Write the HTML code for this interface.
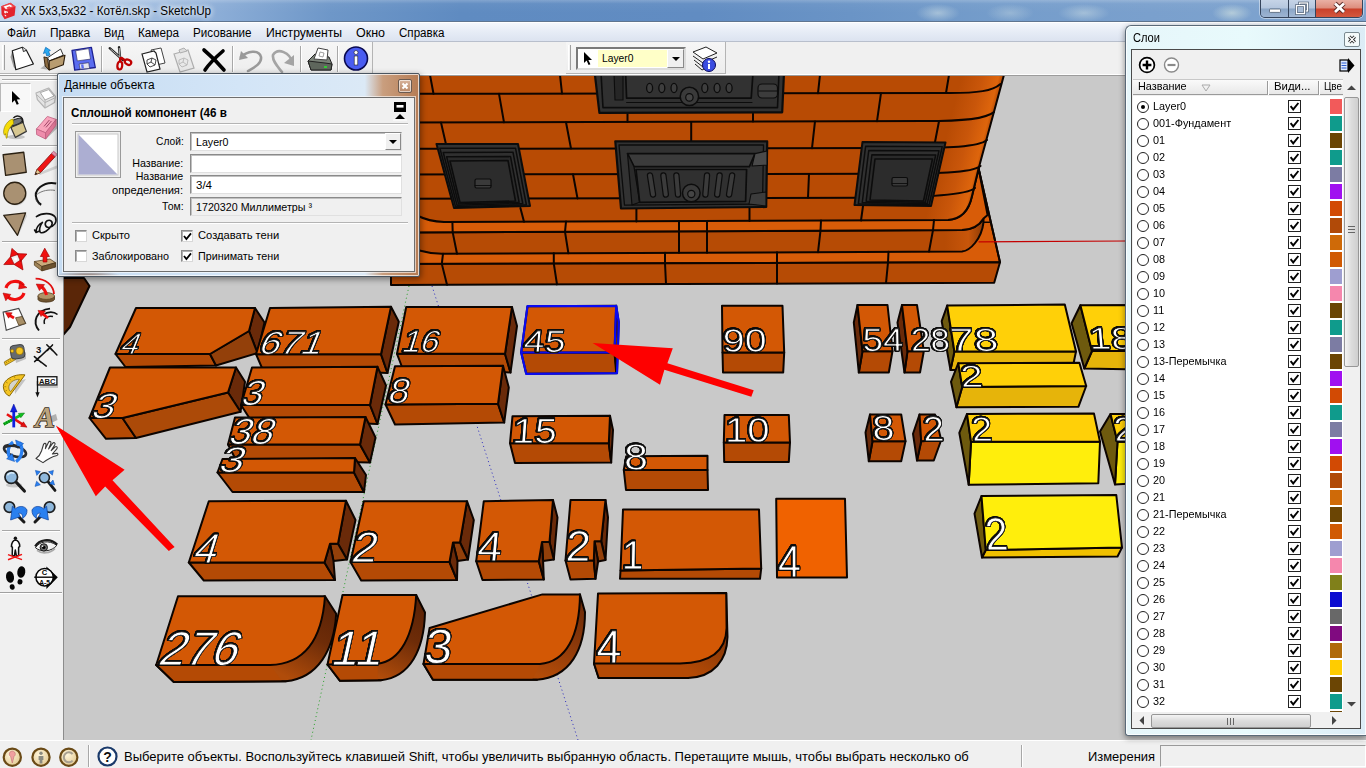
<!DOCTYPE html>
<html lang="ru">
<head>
<meta charset="utf-8">
<title>ХК 5х3,5х32 - Котёл.skp - SketchUp</title>
<style>
*{box-sizing:border-box;margin:0;padding:0}
html,body{width:1366px;height:768px;overflow:hidden;background:#c8c8c8;font-family:"Liberation Sans",sans-serif;font-size:12px;color:#000}
.abs{position:absolute}
#titlebar{left:0;top:0;width:1366px;height:22px;background:linear-gradient(90deg,#c2d5ed 0,#aec7e5 110px,#8eafd8 210px,#6e97c8 330px,#5f8bc1 460px,#618cc2 700px,#6a94c6 850px,#759dcb 1000px,#7aa0cd 1150px,#7fa4cf 1366px)}
#titlebar .t{left:21px;top:4px;font-size:12px;white-space:nowrap;text-shadow:0 0 6px #fff,0 0 6px #fff}
#menubar{left:0;top:22px;width:1366px;height:20px;background:linear-gradient(#f4f7fc 0,#e6ecf6 50%,#dce3f0 100%);border-top:1px solid #fff;border-bottom:1px solid #b8bfcc}
#menubar span{position:absolute;top:2.5px;font-size:12px;white-space:nowrap}#menubar b{font-weight:normal}
#toolbar{left:0;top:42px;width:1366px;height:34px;background:#f0f0f0;border-bottom:1px solid #9c9c9c;box-shadow:inset 0 -1px 0 #fff}
#lefttb{left:0;top:76px;width:64px;height:664px;background:#f0f0f0;border-right:1px solid #8c8c8c}
#status{left:0;top:740px;width:1366px;height:28px;background:#f0f0f0;border-top:1px solid #fff}
#view{left:64px;top:76px;width:1302px;height:664px;background:#c8c8c8}

.sx{display:inline-block;transform-origin:0 50%;white-space:nowrap}.sr{transform-origin:100% 50%}
.sep{position:absolute;top:4px;width:2px;height:26px;border-left:1px solid #a8a8a8;border-right:1px solid #fff}
.ico{position:absolute}
#tb1{left:0;top:0;width:373px;height:32px;border-right:1px solid #b4b4b4;border-bottom:1px solid #b4b4b4;background:linear-gradient(#f6f6f6,#ededed)}
#tb2{left:566px;top:0;width:160px;height:32px;border-right:1px solid #b4b4b4;border-bottom:1px solid #b4b4b4;background:linear-gradient(#f6f6f6,#ededed)}
.grip{position:absolute;left:2px;top:3px;width:3px;height:25px;border-left:1px solid #fff;border-right:1px solid #a0a0a0}
#lcombo{left:576px;top:5px;width:110px;height:23px;background:#fff;border:2px solid;border-color:#7a7a7a #dcdcdc #dcdcdc #7a7a7a}
#lcombo .hl{position:absolute;left:20px;top:1px;width:70px;height:17px;background:#ffffc8}
#lcombo .tx{position:absolute;left:24px;top:3px;font-size:11px}
#lcombo .btn{position:absolute;right:0;top:0;width:17px;height:19px;background:#f0f0f0;border:1px solid;border-color:#fff #8a8a8a #8a8a8a #fff}
#lcombo .btn:after{content:"";position:absolute;left:4px;top:7px;border:4px solid transparent;border-top:4px solid #000;border-bottom:0}
#status .st{position:absolute;left:124px;top:8px;font-size:13px;white-space:nowrap}
#status .meas{position:absolute;left:1088px;top:8px;font-size:13px}
#status .box{position:absolute;left:1160px;top:4px;width:206px;height:22px;background:#f0f0f0;border:1px solid;border-color:#9a9a9a #fff #fff #9a9a9a}
#status .vs{position:absolute;top:4px;width:2px;height:22px;border-left:1px solid #a8a8a8;border-right:1px solid #fff}
.sbi{position:absolute;top:5px;width:19px;height:19px;border-radius:50%;border:2px solid #8a5a2a;background:#f6e6c0}

#ei{left:57px;top:73px;width:363px;height:204px;border:1px solid #4a5560;border-radius:2px;background:radial-gradient(ellipse 34px 7px at 30px 203px,rgba(120,70,40,.75),transparent),linear-gradient(90deg,#c6dcf2 0,#d3e5f7 50%,#dbe9f6 85%,#c99e7e 90%,#b67c54 100%);box-shadow:1px 2px 6px rgba(0,0,0,.45),inset 0 0 0 1px rgba(255,255,255,.7)}
#ei .ttl{left:6px;top:4px;font-size:12px}
#ei .cls{left:340px;top:5px;width:14px;height:14px;border:1px solid #6a5a50;border-radius:2px;background:linear-gradient(#d8b49c,#b88868);box-shadow:inset 0 0 0 1px rgba(255,255,255,.6)}
#ei .in{left:5px;top:23px;width:352px;height:175px;background:#f0f0f0;border:1px solid #6e6e6e;box-shadow:0 0 0 1px rgba(255,255,255,.6)}
.lbl{position:absolute;font-size:11px;white-space:nowrap;text-align:right;right:230.5px}
.inp{position:absolute;left:126px;width:212px;height:19px;background:#fff;border:1px solid;border-color:#8a8a8a #e0e0e0 #e0e0e0 #8a8a8a;font-size:11px;padding:3px 0 0 5px;box-shadow:inset 1px 1px 0 #c0c0c0}
.hr{position:absolute;left:8px;width:336px;height:2px;border-top:1px solid #b4b4b4;border-bottom:1px solid #fff}
.cb{position:absolute;width:12px;height:12px;background:#fff;border:1px solid;border-color:#8a8a8a #d8d8d8 #d8d8d8 #8a8a8a;box-shadow:inset 1px 1px 0 #b0b0b0}
.cbl{position:absolute;font-size:11px;white-space:nowrap}
#ly{left:1125px;top:25px;width:241px;height:711px;border:1px solid #5a6a78;border-right:0;border-radius:6px 0 0 3px;background:linear-gradient(90deg,#e6f6fa 0,#e8fafc 50%,#dcecf6 100%);box-shadow:0 2px 6px rgba(0,0,0,.45),inset 0 0 0 1px rgba(255,255,255,.8)}
#ly .ttl{left:7px;top:5px;font-size:12px}
#ly .cls{left:218px;top:6px;width:16px;height:15px;border:1px solid #7a8a90;border-radius:2px;background:#f4fafa}
#ly .in{left:5px;top:23px;width:230px;height:680px;background:#f0f0f0;border:1px solid #4a4a4a}
#ly .hdr{left:1px;top:28.5px;width:210px;height:16px;background:linear-gradient(#fafafa,#e8e8e8);border-top:1px solid #c8c8c8;border-bottom:1px solid #9a9a9a;font-size:11px}
#ly .hdr i{position:absolute;top:1px;width:2px;height:14px;border-left:1px solid #9a9a9a;border-right:1px solid #fff}
#ly .hdr span{position:absolute;top:0}#ly .hdr b{font-weight:normal}
#ly .list{left:1px;top:46px;width:210px;height:615.5px;background:#fff;overflow:hidden}
.row{position:absolute;left:0;width:210px;height:17px;font-size:11px}
.row .rd{position:absolute;left:4px;top:2px;width:12px;height:12px;border:1px solid #222;border-radius:50%;background:#fff}
.row .nm{position:absolute;left:20px;top:1px;white-space:nowrap;transform-origin:0 50%;transform:scaleX(0.985)}
.row .ck{position:absolute;left:155px;top:1px;width:13px;height:13px;border:1px solid #222;background:#fff}
.row .sw{position:absolute;left:197px;top:0;width:12px;height:15px}
#ly .vsb{left:211px;top:28.5px;width:17px;height:634px;background:#f0f0f0}
#ly .hsb{left:1px;top:662.5px;width:227px;height:15.5px;background:#f0f0f0}
.thumb{position:absolute;border:1px solid #979797;border-radius:2px;background:linear-gradient(90deg,#f4f4f4,#dcdcdc 50%,#cfcfcf)}
.thumbh{position:absolute;border:1px solid #979797;border-radius:2px;background:linear-gradient(#f4f4f4,#dcdcdc 50%,#cfcfcf)}

#titlebar{border-bottom:1px solid #5f7590}
#titlebar:after{content:"";position:absolute;left:0;top:0;width:1366px;height:21px;background:radial-gradient(ellipse 22px 9px at 938px 13px,rgba(230,240,235,.45),transparent),radial-gradient(ellipse 26px 9px at 1084px 13px,rgba(230,240,235,.4),transparent),radial-gradient(ellipse 20px 9px at 1232px 13px,rgba(235,245,230,.5),transparent),radial-gradient(ellipse 24px 9px at 1010px 13px,rgba(230,240,235,.3),transparent),linear-gradient(rgba(255,255,255,.22),rgba(255,255,255,.04) 18%,rgba(255,255,255,0) 60%)}
#wc{left:1260px;top:0;width:103px;height:18px;border:1px solid #35445c;border-top:0;border-radius:0 0 5px 5px;overflow:hidden;box-shadow:0 0 0 1px rgba(255,255,255,.45)}
#wc div{position:absolute;top:0;height:17px}
#wc .mn{left:0;width:28px;background:linear-gradient(#c6d4e7 0,#b4c6de 48%,#8aa5c6 52%,#9db4d2 100%);border-right:1px solid #35445c}
#wc .mx{left:28px;width:27px;background:linear-gradient(#c6d4e7 0,#b4c6de 48%,#8aa5c6 52%,#a3b8d4 100%);border-right:1px solid #35445c}
#wc .cl{left:55px;width:47px;background:linear-gradient(#e9b0a4 0,#dd8c7c 48%,#c9402a 52%,#d4583e 100%)}
</style>
</head>
<body>
<div id="view" class="abs">
<svg id="scene" width="1302" height="665" viewBox="64 76 1302 665">
<!--SCENE-->
<defs>
<linearGradient id="gw" gradientUnits="userSpaceOnUse" x1="964" y1="65.5" x2="1004" y2="75.6"><stop offset="0" stop-color="#b84b04"/><stop offset=".5" stop-color="#c9560a"/><stop offset=".88" stop-color="#de650c"/><stop offset="1" stop-color="#b04804"/></linearGradient>
<linearGradient id="gp" gradientUnits="userSpaceOnUse" x1="945" y1="0" x2="984" y2="0"><stop offset="0" stop-color="#b64b05"/><stop offset=".6" stop-color="#c8560a"/><stop offset="1" stop-color="#8a3a06"/></linearGradient>
<linearGradient id="gr1" gradientUnits="userSpaceOnUse" x1="334" y1="604" x2="292" y2="680"><stop offset="0" stop-color="#5a2206"/><stop offset=".45" stop-color="#6e2c08"/><stop offset="1" stop-color="#b04c0a"/></linearGradient>
<linearGradient id="gr2" gradientUnits="userSpaceOnUse" x1="424" y1="604" x2="386" y2="680"><stop offset="0" stop-color="#5a2206"/><stop offset=".45" stop-color="#6e2c08"/><stop offset="1" stop-color="#b04c0a"/></linearGradient>
<linearGradient id="gr3" gradientUnits="userSpaceOnUse" x1="585" y1="600" x2="550" y2="680"><stop offset="0" stop-color="#6a2a08"/><stop offset=".5" stop-color="#8a380a"/><stop offset="1" stop-color="#b44c08"/></linearGradient>
<linearGradient id="gr4" gradientUnits="userSpaceOnUse" x1="728" y1="630" x2="700" y2="678"><stop offset="0" stop-color="#7a3208"/><stop offset="1" stop-color="#b44a05"/></linearGradient>
</defs>
<rect x="63" y="75" width="1303" height="666" fill="#c9c9c9"/>
<line x1="409" y1="286" x2="311" y2="740" stroke="#28a028" stroke-width="1" stroke-dasharray="1 3"/>
<line x1="432" y1="286" x2="578" y2="740" stroke="#2828c0" stroke-width="1" stroke-dasharray="1 3"/>
<polygon points="978.6,168.5 1000,262.3 391,264 391,247 960,250" fill="#d85c08" stroke="#0c0400" stroke-width="2" stroke-linejoin="round" />
<polygon points="391,264 1000,262.3 994.2,282.8 391,285" fill="#b64b05" stroke="#0c0400" stroke-width="2" stroke-linejoin="round" />
<path d="M391 232.6 L962 230 C972 229.5 979 226 983.5 218.4 L983.5 222.3 C982.5 231 979 238 975 243 C971 248 967 251 962 251.5 L442 253.8 C430 253.4 424 252 417 250 L391 250 Z" fill="url(#gp)" stroke="#0c0400" stroke-width="2" stroke-linejoin="round" stroke-linecap="round" />
<path d="M391 213 L948 220 C962 219 969 210 972 196 L978.6 168.5 L987.6 215 L983.5 218.4 C979 226 972 229.5 962 230 L391 232.6 Z" fill="#d85c08" stroke="#0c0400" stroke-width="2" stroke-linejoin="round" stroke-linecap="round" />
<path d="M391 73 L1004.5 73 L978.6 168.5 L972 196 C969 210 962 219 948 220 L444 222 C432 221.5 424 219 417 215.5 L391 215.5 Z" fill="url(#gw)" stroke="#0c0400" stroke-width="2" stroke-linejoin="round" stroke-linecap="round" />
<line x1="983.5" y1="222.3" x2="989.5" y2="222.3" stroke="#0c0400" stroke-width="1.4" stroke-linecap="round" />
<path d="M400 93.8 L950 93.0143 C977.775 93.0143 992.5 91 1000.5 84" fill="none" stroke="#0c0400" stroke-width="2" stroke-linejoin="round" stroke-linecap="round" />
<path d="M400 122.5 L925 121.094 C962.95 121.094 986 119 994 112" fill="none" stroke="#0c0400" stroke-width="2" stroke-linejoin="round" stroke-linecap="round" />
<path d="M400 148.8 L900 148.086 C947.85 148.086 979 147 987 140" fill="none" stroke="#0c0400" stroke-width="2" stroke-linejoin="round" stroke-linecap="round" />
<path d="M400 174.5 L880 173.814 C935.275 173.814 972.5 173 980.5 166" fill="none" stroke="#0c0400" stroke-width="2" stroke-linejoin="round" stroke-linecap="round" />
<path d="M400 198.8 L862 197.727 C924.15 197.727 967 195 975 188" fill="none" stroke="#0c0400" stroke-width="2" stroke-linejoin="round" stroke-linecap="round" />
<line x1="430" y1="75" x2="433.5" y2="93.8" stroke="#0c0400" stroke-width="2" stroke-linecap="round" />
<line x1="560" y1="75" x2="562" y2="93.5" stroke="#0c0400" stroke-width="2" stroke-linecap="round" />
<line x1="820" y1="75" x2="818" y2="93.2" stroke="#0c0400" stroke-width="2" stroke-linecap="round" />
<line x1="949" y1="75" x2="946" y2="93" stroke="#0c0400" stroke-width="2" stroke-linecap="round" />
<line x1="499" y1="93.8" x2="504" y2="122.3" stroke="#0c0400" stroke-width="2" stroke-linecap="round" />
<line x1="627.5" y1="113.5" x2="627.5" y2="122" stroke="#0c0400" stroke-width="2" stroke-linecap="round" />
<line x1="753" y1="113.5" x2="753" y2="121.6" stroke="#0c0400" stroke-width="2" stroke-linecap="round" />
<line x1="881" y1="93.2" x2="877" y2="121.2" stroke="#0c0400" stroke-width="2" stroke-linecap="round" />
<line x1="441" y1="122.5" x2="447" y2="148.7" stroke="#0c0400" stroke-width="2" stroke-linecap="round" />
<line x1="566" y1="122.3" x2="571" y2="148.5" stroke="#0c0400" stroke-width="2" stroke-linecap="round" />
<line x1="691.2" y1="122" x2="691.2" y2="141" stroke="#0c0400" stroke-width="2" stroke-linecap="round" />
<line x1="815" y1="121.4" x2="812" y2="148.2" stroke="#0c0400" stroke-width="2" stroke-linecap="round" />
<line x1="939" y1="121.2" x2="935" y2="142" stroke="#0c0400" stroke-width="2" stroke-linecap="round" />
<line x1="573" y1="174.3" x2="577.5" y2="198.4" stroke="#0c0400" stroke-width="2" stroke-linecap="round" />
<line x1="809" y1="174" x2="808" y2="197.8" stroke="#0c0400" stroke-width="2" stroke-linecap="round" />
<line x1="520.4" y1="208" x2="524" y2="221.8" stroke="#0c0400" stroke-width="2" stroke-linecap="round" />
<line x1="636.4" y1="209" x2="636.4" y2="221.4" stroke="#0c0400" stroke-width="2" stroke-linecap="round" />
<line x1="749.5" y1="207" x2="749.5" y2="221" stroke="#0c0400" stroke-width="2" stroke-linecap="round" />
<line x1="863" y1="206" x2="861" y2="220.5" stroke="#0c0400" stroke-width="2" stroke-linecap="round" />
<path d="M452.4 221.994 L452.7 232.355 L457 253.746" fill="none" stroke="#0c0400" stroke-width="2" stroke-linejoin="round" stroke-linecap="round" />
<path d="M566 221.548 L565 231.834 L568.4 253.248" fill="none" stroke="#0c0400" stroke-width="2" stroke-linejoin="round" stroke-linecap="round" />
<path d="M679 221.104 L679 231.305 L679 252.754" fill="none" stroke="#0c0400" stroke-width="2" stroke-linejoin="round" stroke-linecap="round" />
<path d="M707 220.994 L707 231.175 L707 252.629" fill="none" stroke="#0c0400" stroke-width="2" stroke-linejoin="round" stroke-linecap="round" />
<path d="M821 220.546 L820.5 230.648 L818 252.134" fill="none" stroke="#0c0400" stroke-width="2" stroke-linejoin="round" stroke-linecap="round" />
<path d="M934 220.102 L933 230.125 L929 251.638" fill="none" stroke="#0c0400" stroke-width="2" stroke-linejoin="round" stroke-linecap="round" />
<path d="M443 253.808 L441.8 263.873 L447 284.815" fill="none" stroke="#0c0400" stroke-width="2" stroke-linejoin="round" stroke-linecap="round" />
<path d="M553.8 253.313 L553.8 263.533 L557 284.383" fill="none" stroke="#0c0400" stroke-width="2" stroke-linejoin="round" stroke-linecap="round" />
<path d="M665 252.817 L665 263.196 L666 283.955" fill="none" stroke="#0c0400" stroke-width="2" stroke-linejoin="round" stroke-linecap="round" />
<path d="M777 252.317 L777 262.856 L777 283.519" fill="none" stroke="#0c0400" stroke-width="2" stroke-linejoin="round" stroke-linecap="round" />
<path d="M888.5 251.819 L888 262.519 L886 283.091" fill="none" stroke="#0c0400" stroke-width="2" stroke-linejoin="round" stroke-linecap="round" />
<polygon points="436.5,144 518,144 530,206 454,208" fill="#323232" stroke="#0c0c0c" stroke-width="2" stroke-linejoin="round" />
<polygon points="439.875,148.25 515.5,148.125 526.375,204.75 455.5,206.625" fill="#303030" stroke="#0c0c0c" stroke-width="1.5" stroke-linejoin="round" />
<polygon points="443.25,152.5 513,152.25 522.75,203.5 457,205.25" fill="#303030" stroke="#0c0c0c" stroke-width="1.5" stroke-linejoin="round" />
<polygon points="446.625,156.75 510.5,156.375 519.125,202.25 458.5,203.875" fill="#2a2a2a" stroke="#0c0c0c" stroke-width="1.5" stroke-linejoin="round" />
<polygon points="450,161 508,160.5 515.5,201 460,202.5" fill="#2c2c2c" stroke="#0c0c0c" stroke-width="1.6" stroke-linejoin="round" />
<rect x="475" y="179" width="16" height="9" rx="1.5" fill="#3a3a3a" stroke="#0c0c0c" stroke-width="1.2"/>
<line x1="475" y1="185.5" x2="491" y2="185.5" stroke="#0c0c0c" stroke-width="0.9" stroke-linecap="round" />
<polygon points="862.5,142 945.5,142.5 931,206 854.5,205" fill="#323232" stroke="#0c0c0c" stroke-width="2" stroke-linejoin="round" />
<polygon points="865.625,146.25 942.25,146.625 929.125,204.75 858.375,203.75" fill="#303030" stroke="#0c0c0c" stroke-width="1.5" stroke-linejoin="round" />
<polygon points="868.75,150.5 939,150.75 927.25,203.5 862.25,202.5" fill="#303030" stroke="#0c0c0c" stroke-width="1.5" stroke-linejoin="round" />
<polygon points="871.875,154.75 935.75,154.875 925.375,202.25 866.125,201.25" fill="#2a2a2a" stroke="#0c0c0c" stroke-width="1.5" stroke-linejoin="round" />
<polygon points="875,159 932.5,159 923.5,201 870,200" fill="#2c2c2c" stroke="#0c0c0c" stroke-width="1.6" stroke-linejoin="round" />
<rect x="892" y="177.5" width="15.5" height="8.5" rx="1.5" fill="#3a3a3a" stroke="#0c0c0c" stroke-width="1.2"/>
<line x1="892" y1="183.5" x2="907.5" y2="183.5" stroke="#0c0c0c" stroke-width="0.9" stroke-linecap="round" />
<polygon points="615.3,141.4 767.2,141.4 766.2,207 621,208.5" fill="#323232" stroke="#0c0c0c" stroke-width="2.2" stroke-linejoin="round" />
<polygon points="619,145 763.5,145 762.5,204 624.5,205.2" fill="#323232" stroke="#0c0c0c" stroke-width="1.3" stroke-linejoin="round" />
<polygon points="627.5,153.6 755,153.6 749.4,166.7 634,166.7" fill="#3b3b3b" stroke="#0c0c0c" stroke-width="1.7" stroke-linejoin="round" />
<polygon points="627.5,153.6 634,166.7 639.7,202.3 632,205" fill="#2a2a2a" stroke="#0c0c0c" stroke-width="1.2" stroke-linejoin="round" />
<polygon points="636,169.5 746.6,169.5 745.6,201.4 639.7,202.3" fill="#303030" stroke="#0c0c0c" stroke-width="1.7" stroke-linejoin="round" />
<path d="M650 175.5 L653 194.5" fill="none" stroke="#0c0c0c" stroke-width="6.4" stroke-linejoin="round" stroke-linecap="round" />
<path d="M650 175.5 L653 194.5" fill="none" stroke="#3b3b3b" stroke-width="4" stroke-linejoin="round" stroke-linecap="round" />
<path d="M663.4 175.5 L665.8 194.5" fill="none" stroke="#0c0c0c" stroke-width="6.4" stroke-linejoin="round" stroke-linecap="round" />
<path d="M663.4 175.5 L665.8 194.5" fill="none" stroke="#3b3b3b" stroke-width="4" stroke-linejoin="round" stroke-linecap="round" />
<path d="M676.4 175.5 L678 194.5" fill="none" stroke="#0c0c0c" stroke-width="6.4" stroke-linejoin="round" stroke-linecap="round" />
<path d="M676.4 175.5 L678 194.5" fill="none" stroke="#3b3b3b" stroke-width="4" stroke-linejoin="round" stroke-linecap="round" />
<path d="M707 175.5 L705.4 194.5" fill="none" stroke="#0c0c0c" stroke-width="6.4" stroke-linejoin="round" stroke-linecap="round" />
<path d="M707 175.5 L705.4 194.5" fill="none" stroke="#3b3b3b" stroke-width="4" stroke-linejoin="round" stroke-linecap="round" />
<path d="M719.6 175.5 L717.2 194.5" fill="none" stroke="#0c0c0c" stroke-width="6.4" stroke-linejoin="round" stroke-linecap="round" />
<path d="M719.6 175.5 L717.2 194.5" fill="none" stroke="#3b3b3b" stroke-width="4" stroke-linejoin="round" stroke-linecap="round" />
<path d="M732.1 175.5 L729.1 194.5" fill="none" stroke="#0c0c0c" stroke-width="6.4" stroke-linejoin="round" stroke-linecap="round" />
<path d="M732.1 175.5 L729.1 194.5" fill="none" stroke="#3b3b3b" stroke-width="4" stroke-linejoin="round" stroke-linecap="round" />
<circle cx="691.3" cy="193" r="8.8" fill="#3a3a3a" stroke="#0c0c0c" stroke-width="1.5"/><circle cx="691.3" cy="194" r="3.6" fill="#454545" stroke="#0c0c0c" stroke-width="1.2"/>
<polygon points="755,153.6 767,151 767,165 752,166" fill="#4a4a4a" stroke="#0c0c0c" stroke-width="1.1" stroke-linejoin="round" />
<polygon points="751,194 766,192 766,206 749,204" fill="#3c3c3c" stroke="#0c0c0c" stroke-width="1.1" stroke-linejoin="round" />
<polygon points="594.7,73 784,73 782.2,112.3 599.4,112.8" fill="#323232" stroke="#0c0c0c" stroke-width="2.2" stroke-linejoin="round" />
<polygon points="601,73 779,73 777.5,107.6 603,107.6" fill="#303030" stroke="#0c0c0c" stroke-width="1.6" stroke-linejoin="round" />
<polygon points="614,73 623,73 623,100 615,100" fill="#262626" stroke="#0c0c0c" stroke-width="1.1" stroke-linejoin="round" />
<polygon points="625.6,73 753,73 751.2,98.2 626.6,98.2" fill="#323232" stroke="#0c0c0c" stroke-width="1.7" stroke-linejoin="round" />
<line x1="626.6" y1="102.5" x2="752" y2="102.5" stroke="#0c0c0c" stroke-width="1.1" stroke-linecap="round" />
<ellipse cx="649.6" cy="88" rx="3" ry="4.6" fill="#3e3e3e" stroke="#0c0c0c" stroke-width="1.3"/>
<ellipse cx="661.8" cy="88" rx="3" ry="4.6" fill="#3e3e3e" stroke="#0c0c0c" stroke-width="1.3"/>
<ellipse cx="674" cy="88" rx="3" ry="4.6" fill="#3e3e3e" stroke="#0c0c0c" stroke-width="1.3"/>
<ellipse cx="704.8" cy="88" rx="3" ry="4.6" fill="#3e3e3e" stroke="#0c0c0c" stroke-width="1.3"/>
<ellipse cx="717.1" cy="88" rx="3" ry="4.6" fill="#3e3e3e" stroke="#0c0c0c" stroke-width="1.3"/>
<ellipse cx="729.1" cy="88" rx="3" ry="4.6" fill="#3e3e3e" stroke="#0c0c0c" stroke-width="1.3"/>
<circle cx="689.4" cy="96.4" r="9.2" fill="#3a3a3a" stroke="#0c0c0c" stroke-width="1.5"/><circle cx="689.4" cy="97.4" r="3.7" fill="#454545" stroke="#0c0c0c" stroke-width="1.2"/>
<rect x="758" y="84" width="19.5" height="14" rx="4" fill="#3c3c3c" stroke="#0c0c0c" stroke-width="1.2"/>
<line x1="759" y1="91" x2="777" y2="91" stroke="#0c0c0c" stroke-width="1" stroke-linecap="round" />
<path d="M978.6 168.5 L1000 262.3" fill="none" stroke="#0c0400" stroke-width="1.9" stroke-linejoin="round" stroke-linecap="round" />
<line x1="978.6" y1="241.8" x2="1126" y2="241" stroke="#c40000" stroke-width="1.2"/>
<polygon points="63,278 84,278 89.5,286 70,327 63,335" fill="#5a2608" stroke="#0c0400" stroke-width="2" stroke-linejoin="round" />
<polygon points="115.5,354 210,354 216,365.5 125.5,367" fill="#b44a05" stroke="#0c0400" stroke-width="2" stroke-linejoin="round" />
<polygon points="255,308 264.5,322.5 257.5,353 249,331" fill="#6a2a09" stroke="#0c0400" stroke-width="2" stroke-linejoin="round" />
<polygon points="249,331 257.5,353 216,365.5 210,354" fill="#93400a" stroke="#0c0400" stroke-width="2" stroke-linejoin="round" />
<polygon points="136,308 255,308 249,331 210,354 115.5,354" fill="#d35805" stroke="#0c0400" stroke-width="2" stroke-linejoin="round" />
<polygon points="256,354.2 381,354.2 387.5,373 262,368" fill="#b44a05" stroke="#0c0400" stroke-width="2" stroke-linejoin="round" />
<polygon points="391,306.8 398.8,321.8 387.5,373 381,354.2" fill="#6a2a09" stroke="#0c0400" stroke-width="2" stroke-linejoin="round" />
<polygon points="270,308 391,306.8 381,354.2 256,354.2" fill="#d35805" stroke="#0c0400" stroke-width="2" stroke-linejoin="round" />
<polygon points="397,353.8 505,353.8 510.5,372.5 402,367" fill="#b44a05" stroke="#0c0400" stroke-width="2" stroke-linejoin="round" />
<polygon points="512,307 517,326 510.5,372.5 505,353.8" fill="#6a2a09" stroke="#0c0400" stroke-width="2" stroke-linejoin="round" />
<polygon points="406.2,307 512,307 505,353.8 397,353.8" fill="#d35805" stroke="#0c0400" stroke-width="2" stroke-linejoin="round" />
<polygon points="89.5,418 122.5,418 136,438 106,438.8" fill="#b44a05" stroke="#0c0400" stroke-width="2" stroke-linejoin="round" />
<polygon points="236,367.5 245,381.8 240.5,411.8 228,392.5" fill="#6a2a09" stroke="#0c0400" stroke-width="2" stroke-linejoin="round" />
<polygon points="228,392.5 240.5,411.8 136,438 122.5,418" fill="#ac4a08" stroke="#0c0400" stroke-width="2" stroke-linejoin="round" />
<polygon points="110,367.5 236,367.5 228,392.5 122.5,418 89.5,418" fill="#d35805" stroke="#0c0400" stroke-width="2" stroke-linejoin="round" />
<polygon points="241,405 370,405 377.5,424 250,419" fill="#b44a05" stroke="#0c0400" stroke-width="2" stroke-linejoin="round" />
<polygon points="377.5,366.8 386,385.5 377.5,424 370,405" fill="#6a2a09" stroke="#0c0400" stroke-width="2" stroke-linejoin="round" />
<polygon points="252,367.5 377.5,366.8 370,405 241,405" fill="#d35805" stroke="#0c0400" stroke-width="2" stroke-linejoin="round" />
<polygon points="385.5,404.5 498,403.8 504.2,422.5 395,424.5" fill="#b44a05" stroke="#0c0400" stroke-width="2" stroke-linejoin="round" />
<polygon points="503,365.8 508.8,387.5 504.2,422.5 498,403.8" fill="#6a2a09" stroke="#0c0400" stroke-width="2" stroke-linejoin="round" />
<polygon points="395,366.2 503,365.8 498,403.8 385.5,404.5" fill="#d35805" stroke="#0c0400" stroke-width="2" stroke-linejoin="round" />
<polygon points="228,444.5 360,444.5 370,462.5 236,460" fill="#b44a05" stroke="#0c0400" stroke-width="2" stroke-linejoin="round" />
<polygon points="365.5,417 375.5,437.5 370,462.5 360,444.5" fill="#6a2a09" stroke="#0c0400" stroke-width="2" stroke-linejoin="round" />
<polygon points="235,417.5 365.5,417 360,444.5 228,444.5" fill="#d35805" stroke="#0c0400" stroke-width="2" stroke-linejoin="round" />
<polygon points="217.5,472.5 354,472.5 364,492 232.5,492" fill="#b44a05" stroke="#0c0400" stroke-width="2" stroke-linejoin="round" />
<polygon points="355,458 366,475 364,492 354,472.5" fill="#6a2a09" stroke="#0c0400" stroke-width="2" stroke-linejoin="round" />
<polygon points="222.5,459 355,458 354,472.5 217.5,472.5" fill="#d35805" stroke="#0c0400" stroke-width="2" stroke-linejoin="round" />
<polygon points="521.2,352.5 614.5,352.5 616.2,373.2 526.2,373.8" fill="#b44a05" stroke="#0c0400" stroke-width="2" stroke-linejoin="round" />
<polygon points="616.2,305.8 618.8,322.5 617,373.2 614.5,352.5" fill="#6a2a09" stroke="#0c0400" stroke-width="2" stroke-linejoin="round" />
<polygon points="527.5,306.2 616.2,305.8 614.5,352.5 521.2,352.5" fill="#d35805" stroke="#0c0400" stroke-width="2" stroke-linejoin="round" />
<path d="M527.5 306.2 L616.2 305.8 L618.8 322.5 L617 373.2 L526.2 373.8 L521.2 352.5 Z M521.2 352.5 L614.5 352.5 L616.2 305.8" fill="none" stroke="#0a0af0" stroke-width="2.2" stroke-linejoin="round" stroke-linecap="round" />
<polygon points="510,443.2 608.8,443.2 611.2,462.5 515,463" fill="#b44a05" stroke="#0c0400" stroke-width="2" stroke-linejoin="round" />
<polygon points="610,415.8 613,430 611.2,462.5 608.8,443.2" fill="#6a2a09" stroke="#0c0400" stroke-width="2" stroke-linejoin="round" />
<polygon points="512.5,416.2 610,415.8 608.8,443.2 510,443.2" fill="#d35805" stroke="#0c0400" stroke-width="2" stroke-linejoin="round" />
<polygon points="623.8,470 707.5,470 708,490 626,490" fill="#b44a05" stroke="#0c0400" stroke-width="2" stroke-linejoin="round" />
<polygon points="626.2,456.2 707.5,455.8 707.5,470 623.8,470" fill="#d35805" stroke="#0c0400" stroke-width="2" stroke-linejoin="round" />
<polygon points="722.5,352.5 784.2,352.5 783.2,372.5 723,372.5" fill="#b44a05" stroke="#0c0400" stroke-width="2" stroke-linejoin="round" />
<polygon points="722,305.8 782.5,305.8 784.2,352.5 722.5,352.5" fill="#d35805" stroke="#0c0400" stroke-width="2" stroke-linejoin="round" />
<polygon points="723.8,442.5 790,442.5 788.8,462 724.2,462" fill="#b44a05" stroke="#0c0400" stroke-width="2" stroke-linejoin="round" />
<polygon points="724.5,415 788.8,415 790,442.5 723.8,442.5" fill="#d35805" stroke="#0c0400" stroke-width="2" stroke-linejoin="round" />
<polygon points="862.5,351.2 892.5,351.2 888.8,372.5 858.8,372.5" fill="#b44a05" stroke="#0c0400" stroke-width="2" stroke-linejoin="round" />
<polygon points="857.5,305 853.8,322.5 858.8,372.5 862.5,351.2" fill="#6a2a09" stroke="#0c0400" stroke-width="2" stroke-linejoin="round" />
<polygon points="857.5,305 887.5,305 892.5,351.2 862.5,351.2" fill="#d35805" stroke="#0c0400" stroke-width="2" stroke-linejoin="round" />
<polygon points="907.5,351.2 923.8,351.2 920,372.5 904.5,372.5" fill="#b44a05" stroke="#0c0400" stroke-width="2" stroke-linejoin="round" />
<polygon points="902,305 897.5,322.5 904.5,372.5 907.5,351.2" fill="#6a2a09" stroke="#0c0400" stroke-width="2" stroke-linejoin="round" />
<polygon points="902,305 917,305 923.8,351.2 907.5,351.2" fill="#d35805" stroke="#0c0400" stroke-width="2" stroke-linejoin="round" />
<polygon points="872.5,441.2 905.5,441.2 901.2,461.2 868.8,461.2" fill="#b44a05" stroke="#0c0400" stroke-width="2" stroke-linejoin="round" />
<polygon points="870,414.5 865.5,432.5 868.8,461.2 872.5,441.2" fill="#6a2a09" stroke="#0c0400" stroke-width="2" stroke-linejoin="round" />
<polygon points="870,414.5 901.2,414.5 905.5,441.2 872.5,441.2" fill="#d35805" stroke="#0c0400" stroke-width="2" stroke-linejoin="round" />
<polygon points="921.2,441.2 941.2,440 933.8,460.5 917,460.5" fill="#b44a05" stroke="#0c0400" stroke-width="2" stroke-linejoin="round" />
<polygon points="919.5,414.5 913,433.8 917,460.5 921.2,441.2" fill="#6a2a09" stroke="#0c0400" stroke-width="2" stroke-linejoin="round" />
<polygon points="919.5,414.5 935,414.5 941.2,440 921.2,441.2" fill="#d35805" stroke="#0c0400" stroke-width="2" stroke-linejoin="round" />
<polygon points="954.4,351.5 1076,351.5 1072.6,368 950.5,370" fill="#e6b40a" stroke="#0c0400" stroke-width="2" stroke-linejoin="round" />
<polygon points="947.2,305.6 941.7,321.2 950.5,370 954.4,351.5" fill="#6e5a0e" stroke="#0c0400" stroke-width="2" stroke-linejoin="round" />
<polygon points="947.2,305.6 1064.8,304.6 1076,351.5 954.4,351.5" fill="#ffd008" stroke="#0c0400" stroke-width="2" stroke-linejoin="round" />
<polygon points="1092,351 1140,351 1140,369.5 1084.3,368.5" fill="#e6b40a" stroke="#0c0400" stroke-width="2" stroke-linejoin="round" />
<polygon points="1080.4,305.2 1071.6,323.2 1084.3,368.5 1092,351" fill="#6e5a0e" stroke="#0c0400" stroke-width="2" stroke-linejoin="round" />
<polygon points="1080.4,305.2 1140,305 1140,351 1092,351" fill="#ffd008" stroke="#0c0400" stroke-width="2" stroke-linejoin="round" />
<polygon points="962.2,387 1086.2,386 1078.4,406.8 956.4,407.2" fill="#e6b40a" stroke="#0c0400" stroke-width="2" stroke-linejoin="round" />
<polygon points="958.3,363.2 951,381.8 956.4,407.2 962.2,387" fill="#6e5a0e" stroke="#0c0400" stroke-width="2" stroke-linejoin="round" />
<polygon points="958.3,363.2 1079.4,362.7 1086.2,386 962.2,387" fill="#ffd008" stroke="#0c0400" stroke-width="2" stroke-linejoin="round" />
<polygon points="971,441.7 1100,441.7 1098.3,483.2 968.7,484.8" fill="#ffee0c" stroke="#0c0400" stroke-width="2" stroke-linejoin="round" />
<polygon points="967,414 959.3,432.8 968.7,484.8 971,441.7" fill="#6e5a0e" stroke="#0c0400" stroke-width="2" stroke-linejoin="round" />
<polygon points="967,414 1094,413.6 1100,441.7 971,441.7" fill="#ffd008" stroke="#0c0400" stroke-width="2" stroke-linejoin="round" />
<polygon points="1117.5,441.7 1140,441.7 1140,483 1115,484.4" fill="#ffee0c" stroke="#0c0400" stroke-width="2" stroke-linejoin="round" />
<polygon points="1110.5,414 1100,431.6 1115,484.4 1117.5,441.7" fill="#6e5a0e" stroke="#0c0400" stroke-width="2" stroke-linejoin="round" />
<polygon points="1110.5,414 1140,414 1140,441.7 1117.5,441.7" fill="#ffd008" stroke="#0c0400" stroke-width="2" stroke-linejoin="round" />
<polygon points="985.8,550 1122,547.6 1117.5,556.5 982,557.5" fill="#f0c000" stroke="#0c0400" stroke-width="2" stroke-linejoin="round" />
<polygon points="981.5,496 974.5,513.7 982,557.5 985.8,550" fill="#6e5a0e" stroke="#0c0400" stroke-width="2" stroke-linejoin="round" />
<polygon points="981.5,496 1116.3,495 1122,547.6 985.8,550" fill="#ffee0c" stroke="#0c0400" stroke-width="2" stroke-linejoin="round" />
<polygon points="188.8,562.5 324.5,562.5 335,580 203.8,580.5" fill="#b44a05" stroke="#0c0400" stroke-width="2" stroke-linejoin="round" />
<polygon points="346,500.8 355.5,520 347,559.5 338,543.8" fill="#6a2a09" stroke="#0c0400" stroke-width="2" stroke-linejoin="round" />
<polygon points="330,543.8 338,543.8 347,559.5 333.5,561" fill="#93400a" stroke="#0c0400" stroke-width="2" stroke-linejoin="round" />
<polygon points="330,543.8 333.5,561 335,580 324.5,562.5" fill="#6a2a09" stroke="#0c0400" stroke-width="2" stroke-linejoin="round" />
<polygon points="208.8,501.2 346,500.8 338,543.8 330,543.8 324.5,562.5 188.8,562.5" fill="#d35805" stroke="#0c0400" stroke-width="2" stroke-linejoin="round" />
<polygon points="350.5,562 449.5,562 457,580 361.2,580.5" fill="#b44a05" stroke="#0c0400" stroke-width="2" stroke-linejoin="round" />
<polygon points="467,501.2 473.8,520 468,559.5 460,542.5" fill="#6a2a09" stroke="#0c0400" stroke-width="2" stroke-linejoin="round" />
<polygon points="453,542.5 460,542.5 468,559.5 457.5,561" fill="#93400a" stroke="#0c0400" stroke-width="2" stroke-linejoin="round" />
<polygon points="453,542.5 457.5,561 457,580 449.5,562" fill="#6a2a09" stroke="#0c0400" stroke-width="2" stroke-linejoin="round" />
<polygon points="363.8,501.2 467,501.2 460,542.5 453,542.5 449.5,562 350.5,562" fill="#d35805" stroke="#0c0400" stroke-width="2" stroke-linejoin="round" />
<polygon points="476.2,561.2 538.8,561.2 543.8,579.5 482.5,580" fill="#b44a05" stroke="#0c0400" stroke-width="2" stroke-linejoin="round" />
<polygon points="553,500 557.5,517.5 553.8,559.5 549.5,542" fill="#6a2a09" stroke="#0c0400" stroke-width="2" stroke-linejoin="round" />
<polygon points="542,542 549.5,542 553.8,559.5 543.1,561" fill="#93400a" stroke="#0c0400" stroke-width="2" stroke-linejoin="round" />
<polygon points="542,542 543.1,561 543.8,579.5 538.8,561.2" fill="#6a2a09" stroke="#0c0400" stroke-width="2" stroke-linejoin="round" />
<polygon points="483.8,501.2 553,500 549.5,542 542,542 538.8,561.2 476.2,561.2" fill="#d35805" stroke="#0c0400" stroke-width="2" stroke-linejoin="round" />
<polygon points="565.5,560.5 593.8,560.5 595.5,578.8 570.5,579.5" fill="#b44a05" stroke="#0c0400" stroke-width="2" stroke-linejoin="round" />
<polygon points="605.5,500 608,517.5 605.5,560 601.2,541.2" fill="#6a2a09" stroke="#0c0400" stroke-width="2" stroke-linejoin="round" />
<polygon points="594.5,541.2 601.2,541.2 605.5,560 598.1,561.5" fill="#93400a" stroke="#0c0400" stroke-width="2" stroke-linejoin="round" />
<polygon points="594.5,541.2 598.1,561.5 595.5,578.8 593.8,560.5" fill="#6a2a09" stroke="#0c0400" stroke-width="2" stroke-linejoin="round" />
<polygon points="570.5,500 605.5,500 601.2,541.2 594.5,541.2 593.8,560.5 565.5,560.5" fill="#d35805" stroke="#0c0400" stroke-width="2" stroke-linejoin="round" />
<polygon points="620.5,570.5 761.2,568.5 760,578.8 620,578.8" fill="#b44a05" stroke="#0c0400" stroke-width="2" stroke-linejoin="round" />
<polygon points="623,509.5 759,509.5 761.2,568.5 620.5,570.5" fill="#d35805" stroke="#0c0400" stroke-width="2" stroke-linejoin="round" />
<polygon points="776.2,498.8 845,498.8 847,577.5 777,577.5" fill="#f06200" stroke="#0c0400" stroke-width="2" stroke-linejoin="round" />
<path d="M325 596.2 L336.2 613.8 C334 650 318 678 286 681.3 L173.8 682 L156.2 665 Z" fill="url(#gr1)" stroke="#0c0400" stroke-width="2" stroke-linejoin="round" stroke-linecap="round" />
<polygon points="156.2,665 270,665 282,681.3 173.8,682" fill="#b44a05" stroke="none" stroke-width="0" stroke-linejoin="round" />
<path d="M156.2 665 L173.8 682 L286 681.3" fill="none" stroke="#0c0400" stroke-width="2" stroke-linejoin="round" stroke-linecap="round" />
<path d="M178 596.2 L325 596.2 C322 640 304 664 270 665 L156.2 665 Z" fill="#d35805" stroke="#0c0400" stroke-width="2" stroke-linejoin="round" stroke-linecap="round" />
<path d="M416.2 595 L425 612.5 C424 650 410 677 381 680.2 L340 680.8 L327.5 664.5 Z" fill="url(#gr2)" stroke="#0c0400" stroke-width="2" stroke-linejoin="round" stroke-linecap="round" />
<polygon points="327.5,664.5 377.5,663.8 378,680.2 340,680.8" fill="#b44a05" stroke="none" stroke-width="0" stroke-linejoin="round" />
<path d="M327.5 664.5 L340 680.8 L381 680.2" fill="none" stroke="#0c0400" stroke-width="2" stroke-linejoin="round" stroke-linecap="round" />
<path d="M342.5 595 L416.2 595 C414 636 400 661 377.5 663.8 L327.5 664.5 Z" fill="#d35805" stroke="#0c0400" stroke-width="2" stroke-linejoin="round" stroke-linecap="round" />
<path d="M580 594.4 L585 612 C585 650 570 677 537 679.8 L433 679.8 L423.5 664 Z" fill="url(#gr3)" stroke="#0c0400" stroke-width="2" stroke-linejoin="round" stroke-linecap="round" />
<polygon points="423.5,664 540,664 532,679.8 433,679.8" fill="#b44a05" stroke="none" stroke-width="0" stroke-linejoin="round" />
<path d="M423.5 664 L433 679.8 L537 679.8" fill="none" stroke="#0c0400" stroke-width="2" stroke-linejoin="round" stroke-linecap="round" />
<path d="M429.6 628 L542.4 594.4 L580 594.4 C579.5 636 566 662 540 664 L423.5 664 Z" fill="#d35805" stroke="#0c0400" stroke-width="2" stroke-linejoin="round" stroke-linecap="round" />
<path d="M726.2 593 L727.5 637 C727 660 714 677 688 678 L598.7 678 L594 663.5 Z" fill="url(#gr4)" stroke="#0c0400" stroke-width="2" stroke-linejoin="round" stroke-linecap="round" />
<polygon points="594,663.5 680,663.5 684,678 598.7,678" fill="#b44a05" stroke="none" stroke-width="0" stroke-linejoin="round" />
<path d="M594 663.5 L598.7 678 L688 678" fill="none" stroke="#0c0400" stroke-width="2" stroke-linejoin="round" stroke-linecap="round" />
<path d="M598 593.6 L726.2 593 L726.6 628 C726 650 712 663 680 663.5 L594 663.5 Z" fill="#d35805" stroke="#0c0400" stroke-width="2" stroke-linejoin="round" stroke-linecap="round" />
<g font-family="Liberation Sans, sans-serif" stroke-linejoin="round" style="filter:drop-shadow(.8px 0 0 #0c0c0c) drop-shadow(-.8px 0 0 #0c0c0c) drop-shadow(0 .8px 0 #0c0c0c) drop-shadow(0 -.8px 0 #0c0c0c)">
<text transform="translate(119,353.5) skewX(-22)" font-size="29.4" textLength="17.6" lengthAdjust="spacingAndGlyphs" fill="#fff" stroke="#0c0c0c" stroke-width=".8">4</text>
<text transform="translate(257,353.5) skewX(-22)" font-size="32.2" textLength="62.7" lengthAdjust="spacingAndGlyphs" fill="#fff" stroke="#0c0c0c" stroke-width=".8">671</text>
<text transform="translate(400.5,352) skewX(-17)" font-size="30.8" textLength="36.7" lengthAdjust="spacingAndGlyphs" fill="#fff" stroke="#0c0c0c" stroke-width=".8">16</text>
<text transform="translate(523,352) skewX(-5)" font-size="30.8" textLength="41.8" lengthAdjust="spacingAndGlyphs" fill="#fff" stroke="#0c0c0c" stroke-width=".8">45</text>
<text transform="translate(722.8,351.5) skewX(0)" font-size="33.6" textLength="43.8" lengthAdjust="spacingAndGlyphs" fill="#fff" stroke="#0c0c0c" stroke-width=".8">90</text>
<text transform="translate(862.8,350.5) skewX(1)" font-size="32.2" textLength="40.9" lengthAdjust="spacingAndGlyphs" fill="#fff" stroke="#0c0c0c" stroke-width=".8">54</text>
<text transform="translate(911.2,350.5) skewX(2)" font-size="32.2" textLength="39.2" lengthAdjust="spacingAndGlyphs" fill="#fff" stroke="#0c0c0c" stroke-width=".8">28</text>
<text transform="translate(950,350.5) skewX(3)" font-size="32.2" textLength="49.1" lengthAdjust="spacingAndGlyphs" fill="#fff" stroke="#0c0c0c" stroke-width=".8">78</text>
<text transform="translate(1090,349) skewX(5)" font-size="30.8" textLength="43.8" lengthAdjust="spacingAndGlyphs" fill="#fff" stroke="#0c0c0c" stroke-width=".8">18</text>
<text transform="translate(961.2,386.5) skewX(4)" font-size="30.8" textLength="22.5" lengthAdjust="spacingAndGlyphs" fill="#fff" stroke="#0c0c0c" stroke-width=".8">2</text>
<text transform="translate(89.5,417.5) skewX(-22)" font-size="35" textLength="22.7" lengthAdjust="spacingAndGlyphs" fill="#fff" stroke="#0c0c0c" stroke-width=".8">3</text>
<text transform="translate(239.5,404.5) skewX(-20)" font-size="35" textLength="21.2" lengthAdjust="spacingAndGlyphs" fill="#fff" stroke="#0c0c0c" stroke-width=".8">3</text>
<text transform="translate(386.8,403) skewX(-14)" font-size="35" textLength="20.7" lengthAdjust="spacingAndGlyphs" fill="#fff" stroke="#0c0c0c" stroke-width=".8">8</text>
<text transform="translate(227,444) skewX(-20)" font-size="36.4" textLength="44.1" lengthAdjust="spacingAndGlyphs" fill="#fff" stroke="#0c0c0c" stroke-width=".8">38</text>
<text transform="translate(217,472) skewX(-20)" font-size="35.7" textLength="24.3" lengthAdjust="spacingAndGlyphs" fill="#fff" stroke="#0c0c0c" stroke-width=".8">3</text>
<text transform="translate(511.8,442.5) skewX(-4)" font-size="35" textLength="44.4" lengthAdjust="spacingAndGlyphs" fill="#fff" stroke="#0c0c0c" stroke-width=".8">15</text>
<text transform="translate(624,469.5) skewX(0)" font-size="36.3" textLength="24.1" lengthAdjust="spacingAndGlyphs" fill="#fff" stroke="#0c0c0c" stroke-width=".8">8</text>
<text transform="translate(725,441.5) skewX(0)" font-size="35.9" textLength="44.7" lengthAdjust="spacingAndGlyphs" fill="#fff" stroke="#0c0c0c" stroke-width=".8">10</text>
<text transform="translate(872.8,440) skewX(2)" font-size="35" textLength="22.1" lengthAdjust="spacingAndGlyphs" fill="#fff" stroke="#0c0c0c" stroke-width=".8">8</text>
<text transform="translate(923.8,440.5) skewX(3)" font-size="35" textLength="21.1" lengthAdjust="spacingAndGlyphs" fill="#fff" stroke="#0c0c0c" stroke-width=".8">2</text>
<text transform="translate(972.5,441) skewX(4)" font-size="34.2" textLength="20.7" lengthAdjust="spacingAndGlyphs" fill="#fff" stroke="#0c0c0c" stroke-width=".8">2</text>
<text transform="translate(1115,441) skewX(5)" font-size="34.2" textLength="20.9" lengthAdjust="spacingAndGlyphs" fill="#fff" stroke="#0c0c0c" stroke-width=".8">2</text>
<text transform="translate(986.2,549.5) skewX(4)" font-size="46.1" textLength="22.8" lengthAdjust="spacingAndGlyphs" fill="#fff" stroke="#0c0c0c" stroke-width=".8">2</text>
<text transform="translate(191.8,562.5) skewX(-17)" font-size="41.9" textLength="23" lengthAdjust="spacingAndGlyphs" fill="#fff" stroke="#0c0c0c" stroke-width=".8">4</text>
<text transform="translate(350.2,561.5) skewX(-12)" font-size="42.7" textLength="25.1" lengthAdjust="spacingAndGlyphs" fill="#fff" stroke="#0c0c0c" stroke-width=".8">2</text>
<text transform="translate(476.5,561) skewX(-5)" font-size="41.2" textLength="24.7" lengthAdjust="spacingAndGlyphs" fill="#fff" stroke="#0c0c0c" stroke-width=".8">4</text>
<text transform="translate(565.2,561) skewX(-3)" font-size="43.3" textLength="24.8" lengthAdjust="spacingAndGlyphs" fill="#fff" stroke="#0c0c0c" stroke-width=".8">2</text>
<text transform="translate(621.8,569) skewX(-1)" font-size="40.6" textLength="21.5" lengthAdjust="spacingAndGlyphs" fill="#fff" stroke="#0c0c0c" stroke-width=".8">1</text>
<text transform="translate(778,576.5) skewX(0)" font-size="44.8" textLength="23" lengthAdjust="spacingAndGlyphs" fill="#fff" stroke="#0c0c0c" stroke-width=".8">4</text>
<text transform="translate(156.8,664.5) skewX(-20)" font-size="47.6" textLength="78.2" lengthAdjust="spacingAndGlyphs" fill="#fff" stroke="#0c0c0c" stroke-width=".8">276</text>
<text transform="translate(329.5,664.5) skewX(-12.5)" font-size="48.9" textLength="51.1" lengthAdjust="spacingAndGlyphs" fill="#fff" stroke="#0c0c0c" stroke-width=".8">11</text>
<text transform="translate(423,663) skewX(-7)" font-size="48.3" textLength="27.9" lengthAdjust="spacingAndGlyphs" fill="#fff" stroke="#0c0c0c" stroke-width=".8">3</text>
<text transform="translate(596.2,662.5) skewX(-1)" font-size="46.8" textLength="25.1" lengthAdjust="spacingAndGlyphs" fill="#fff" stroke="#0c0c0c" stroke-width=".8">4</text>
</g>
<!--/SCENE-->
</svg>
</div>
<div id="titlebar" class="abs"><svg class="abs" style="left:0;top:2px;z-index:2" width="17" height="18" viewBox="0 0 17 18"><path d="M1.2 4.2 L10.4 0.8 L15.6 4.6 L14.6 13.6 L4.6 17.2 L1.6 12.4 Z" fill="#e3232c"/><path d="M1.2 4.2 L10.4 0.8 L15.6 4.6 L6.4 8 Z" fill="#f0454a"/><path d="M3.6 4.6 L9.8 2.4 L12.6 4.2 L10.4 5 L9.4 4.2 L6.4 5.4 L7.6 6.4 L5.8 7 Z" fill="#fff"/><path d="M4.2 8.6 L8 9.8 L8 11 L6 10.4 L6 11.6 L4.2 11 Z M4.6 12.6 L6.2 13.2 L6.2 14.6 L4.8 14 Z" fill="#fff" opacity=".9"/></svg><div class="abs t"><span class="sx" id="t_title" style="transform:scaleX(0.975)">ХК 5х3,5х32 - Котёл.skp - SketchUp</span></div></div>
<div id="menubar" class="abs">
<span style="left:7px"><b class="sx" id="m1" style="transform:scaleX(0.983)">Файл</b></span><span style="left:50px"><b class="sx" id="m2" style="transform:scaleX(0.987)">Правка</b></span><span style="left:104px"><b class="sx" id="m3" style="transform:scaleX(0.921)">Вид</b></span><span style="left:138px"><b class="sx" id="m4" style="transform:scaleX(0.978)">Камера</b></span><span style="left:193px"><b class="sx" id="m5" style="transform:scaleX(0.968)">Рисование</b></span><span style="left:266px"><b class="sx" id="m6" style="transform:scaleX(1.016)">Инструменты</b></span><span style="left:356px"><b class="sx" id="m7" style="transform:scaleX(1.040)">Окно</b></span><span style="left:399px"><b class="sx" id="m8" style="transform:scaleX(0.966)">Справка</b></span>
</div>
<div id="toolbar" class="abs">
<div id="tb1" class="abs"><div class="grip"></div>
<svg class="ico" style="left:9px;top:3px" width="28" height="28" viewBox="0 0 28 28"><path d="M1.5 12 L3.3 5.8 L6.8 24.7 L4.6 22 Z" fill="#9a9a9a"/><path d="M3.3 5.8 L13.4 2.3 L17.4 5.3 L24.4 19 L6.8 24.7 Z" fill="#fff" stroke="#1a1a1a" stroke-width="1.2" stroke-linejoin="round"/><path d="M13.4 2.3 L14.4 6.6 L17.4 5.3" fill="#e8e8e8" stroke="#1a1a1a" stroke-width=".9" stroke-linejoin="round"/></svg>
<svg class="ico" style="left:39px;top:3px" width="30" height="28" viewBox="0 0 30 28"><path d="M6 20 L1.4 23.6 L10.2 25.1 Z" fill="#b0b0b0"/><path d="M4.9 11.9 L8.5 12.8 L10.2 25.1 L6.2 21 Z" fill="#8a6a40" stroke="#2a1a08" stroke-width=".9" stroke-linejoin="round"/><path d="M8.5 12.8 L21.6 4 L24.3 10.2 L10.2 15.9 Z" fill="#fff" stroke="#333" stroke-width="1" stroke-linejoin="round"/><path d="M10.2 15.9 L26 10.2 L24.3 19.8 L10.2 25.1 Z" fill="#b89c70" stroke="#2a1a08" stroke-width="1.1" stroke-linejoin="round"/><path d="M6.7 2.3 L11.4 5.4 L9.6 6.4 L11 10 L7.8 11 L6.6 7.6 L4.4 8.6 Z" fill="#28a8f0" stroke="#0a68b8" stroke-width=".7" stroke-linejoin="round"/></svg>
<svg class="ico" style="left:70px;top:3px" width="28" height="28" viewBox="0 0 28 28"><path d="M2 5.3 L21.4 2.3 L25.3 22.5 L4.7 25.1 Z" fill="#5a6cf0" stroke="#1c2090" stroke-width="1.3" stroke-linejoin="round"/><path d="M5.6 5.8 L18.75 3.6 L20.5 14.1 L7.3 15.9 Z" fill="#fff" stroke="#3a3a6a" stroke-width=".7"/><path d="M9.1 19 L18.75 17.65 L19.6 23.4 L10 24.2 Z" fill="#e4e4ee" stroke="#3a3a6a" stroke-width=".7"/><path d="M11 19.6 L13.4 19.3 L14 23.4 L11.6 23.6 Z" fill="#5a6cf0"/></svg>
<div class="sep" style="left:101px"></div>
<svg class="ico" style="left:106px;top:3px" width="30" height="28" viewBox="0 0 30 28"><path d="M3.7 3.2 L17 15 M13 2.1 L14.2 14" stroke="#222" stroke-width="2.4" fill="none" stroke-linecap="round"/><path d="M4.5 4 L16 14 M13.2 3 L14 13" stroke="#ddd" stroke-width=".8" fill="none"/><path d="M14.5 12 L14 17 M15 12.5 L20 16" stroke="#c00000" stroke-width="2.4"/><ellipse cx="13.8" cy="20.5" rx="2.4" ry="4" transform="rotate(8 13.8 20.5)" fill="none" stroke="#c00000" stroke-width="2.2"/><ellipse cx="22" cy="17.2" rx="3.4" ry="2.4" transform="rotate(28 22 17.2)" fill="none" stroke="#c00000" stroke-width="2.2"/></svg>
<svg class="ico" style="left:139px;top:3px" width="28" height="28" viewBox="0 0 28 28"><path d="M12 5 L22 3 L26 18 L17 20 Z" fill="#fff" stroke="#444" stroke-width="1"/><path d="M3 9 L15 6 L17 8 L21 24 L8 27 Z" fill="#fff" stroke="#222" stroke-width="1.2"/><path d="M8 15 L13 13 L17 15 L16 20 L11 22 L8 19 Z M12 17 L13 13 M12 17 L16 20 M12 17 L8 19" fill="none" stroke="#333" stroke-width=".9"/></svg>
<svg class="ico" style="left:170px;top:3px" width="28" height="28" viewBox="0 0 28 28" opacity=".55"><path d="M4 9 L18 5 L24 23 L10 27 Z" fill="#e4e4e4" stroke="#777" stroke-width="1.2"/><path d="M9 5 L14 3 L17 6 L10 8 Z" fill="#ccc" stroke="#777"/><path d="M9 15 L14 13 L18 15 L17 20 L12 22 L9 19 Z M13 17 L14 13 M13 17 L17 20 M13 17 L9 19" fill="none" stroke="#888" stroke-width=".9"/></svg>
<svg class="ico" style="left:200px;top:3px" width="28" height="28" viewBox="0 0 28 28"><path d="M4 5 C10 10 18 18 24 25 M23 6 C16 12 9 19 5 25" stroke="#000" stroke-width="3.6" fill="none" stroke-linecap="round"/></svg>
<div class="sep" style="left:232px"></div>
<svg class="ico" style="left:237px;top:3px" width="28" height="28" viewBox="0 0 28 28"><path d="M4 12 C10 6 22 4 24 12 C25 19 16 23 11 26" stroke="#9a9a9a" stroke-width="2.6" fill="none" stroke-linecap="round"/><path d="M2 15 L4 6 L11 13 Z" fill="#9a9a9a"/></svg>
<svg class="ico" style="left:268px;top:3px" width="28" height="28" viewBox="0 0 28 28"><path d="M24 17 C22 8 10 2 5 10 C4 16 10 22 14 27" stroke="#a4a4a4" stroke-width="2.6" fill="none" stroke-linecap="round"/><path d="M26 10 L26 21 L16 18 Z" fill="#a4a4a4"/></svg>
<div class="sep" style="left:300px"></div>
<svg class="ico" style="left:305px;top:3px" width="30" height="28" viewBox="0 0 30 28"><path d="M3 16 L10 9 L24 12 L27 19 L26 25 L6 25 Z" fill="#7a8278" stroke="#222" stroke-width="1"/><path d="M3 16 L20 18 L27 19 L26 25 L6 25 Z" fill="#5e665c" stroke="#222" stroke-width="1"/><path d="M9 14 L13 3 L23 5 L22 15 Z" fill="#fff" stroke="#444" stroke-width="1"/><path d="M15 7 l4 1 l-1 4 l-4 -1 z" fill="none" stroke="#888" stroke-width=".8"/><rect x="19" y="21" width="3" height="2" fill="#3c3"/></svg>
<div class="sep" style="left:337px"></div>
<svg class="ico" style="left:342px;top:3px" width="28" height="28" viewBox="0 0 28 28"><circle cx="14" cy="13.5" r="11.5" fill="#4a5cf0" stroke="#0a0a50" stroke-width="1.6"/><circle cx="14" cy="7.5" r="2" fill="#fff" stroke="#222" stroke-width=".6"/><rect x="12.2" y="11" width="3.6" height="9" fill="#fff" stroke="#222" stroke-width=".6"/></svg>
</div>
<div id="tb2" class="abs"><div class="grip"></div></div>
<div id="lcombo" class="abs"><svg style="position:absolute;left:5px;top:2px" width="10" height="15" viewBox="0 0 10 15"><path d="M1 1 L1 12 L3.6 9.6 L5.6 14 L7.4 13.2 L5.4 9 L9 9 Z" fill="#000"/></svg><div class="hl"></div><div class="tx"><span class="sx" id="cb0" style="transform:scaleX(0.936)">Layer0</span></div><div class="btn"></div></div>
<svg class="ico" style="left:690px;top:2px" width="30" height="30" viewBox="0 0 30 30"><path d="M3 8 L16 3 L27 9 L13 15 Z" fill="#fff" stroke="#222" stroke-width="1"/><path d="M3 12 L13 19 L27 13 M4 16 L13 23 L20 20 M5 20 L12 26 L16 24" fill="none" stroke="#222" stroke-width="1"/><circle cx="19" cy="21" r="6.5" fill="#3a4ce0" stroke="#0a0a60" stroke-width="1"/><circle cx="19" cy="17.8" r="1.2" fill="#fff"/><rect x="18" y="20" width="2" height="5" fill="#fff"/></svg>
</div>
<div id="lefttb" class="abs">
<div class="abs" style="left:0;top:7px;width:31px;height:29px;background:#f8f8f8;border:1px solid;border-color:#b8b8b8 #fff #fff #b8b8b8"></div>
<svg class="ico" style="left:0px;top:7px" width="30" height="30" viewBox="0 0 30 30"><path d="M12 8.1 L12 19.8 L14.7 17.3 L16.7 21.8 L18.8 20.9 L16.8 16.6 L20.4 16.3 Z" fill="#000" stroke="#fff" stroke-width=".9" paint-order="stroke"/></svg>
<svg class="ico" style="left:30px;top:7px" width="30" height="30" viewBox="0 0 30 30"><path d="M6 10 L18.6 5 L25.4 13.4 L24.6 19.6 L15 25 L7.4 16.6 Z" fill="#e4e4e4" stroke="#b4b4b4" stroke-width="1.2" stroke-linejoin="round"/><path d="M10.3 9.6 L18.7 6.6 L24 13 L15 17 Z" fill="#fff" stroke="#a8a8a8" stroke-width="1"/><path d="M15 17 L15 24 M7 12 L15 19.6 L24.6 15" fill="none" stroke="#b4b4b4" stroke-width="1"/></svg>
<svg class="ico" style="left:0px;top:37px" width="30" height="30" viewBox="0 0 30 30"><ellipse cx="16" cy="24" rx="9" ry="2.2" fill="#c4c4c4"/><path d="M9.6 11.4 L22 6.6 L26.4 18.4 L15.4 24.4 Z" fill="#d6c690" stroke="#3a3a3a" stroke-width="1.2" stroke-linejoin="round"/><path d="M9.6 11.4 L22 6.6 L23 9.6 L10.8 14.6 Z" fill="#55585c" stroke="#2a2a2a" stroke-width=".8"/><ellipse cx="15.8" cy="9" rx="6.8" ry="2.7" transform="rotate(-21 15.8 9)" fill="#74787c" stroke="#2a2a2a" stroke-width="1.1"/><path d="M13.4 5.2 C16 1.4 23.6 2.6 22.8 9.6" fill="none" stroke="#1a1a1a" stroke-width="1.5"/><path d="M13 6 C8 7 3.6 13 3.6 19 C3.8 22 5 23.4 5.6 20.6 C5.8 23 6 25.4 6.8 25.4 C7.6 25 7.2 21 8.2 18.4 C9 15.4 11 13.4 13.6 10.6 Z" fill="#f6dc08" stroke="#8a7a00" stroke-width=".6"/></svg>
<svg class="ico" style="left:30px;top:37px" width="30" height="30" viewBox="0 0 30 30"><path d="M12 23 L27 12 L27.4 15 L15.6 26.6 Z" fill="#b8b8b8"/><path d="M6.4 16 L17.4 3.4 L26.2 6.4 L15.6 19.8 Z" fill="#f8a4bc" stroke="#c06080" stroke-width=".8" stroke-linejoin="round"/><path d="M6.4 16 L15.6 19.8 L15.6 26 L6.6 21.6 Z" fill="#ee8cac" stroke="#c06080" stroke-width=".8" stroke-linejoin="round"/><path d="M15.6 19.8 L26.2 6.4 L26.2 12 L15.6 26 Z" fill="#e07898" stroke="#c06080" stroke-width=".8" stroke-linejoin="round"/><path d="M14 13.4 L19.4 7 M16 14.4 L21.4 8" stroke="#a04868" stroke-width="1"/></svg>
<svg class="ico" style="left:0px;top:72px" width="30" height="30" viewBox="0 0 30 30"><path d="M6.6 28 L27.6 24.6 L26.25 24.25 L5.6 27.4 Z" fill="#c8c8c8"/><path d="M3.1 6.75 L23.75 4.25 L26.25 24.25 L5.6 27.4 Z" fill="#a99172" stroke="#2a2012" stroke-width="1.3" stroke-linejoin="round"/></svg>
<svg class="ico" style="left:30px;top:72px" width="30" height="30" viewBox="0 0 30 30"><path d="M8 25 L28 17 L28 20 L10 27 Z" fill="#d0d0d0"/><path d="M5 26.75 L7 21.4 L21.6 5.4 L25.2 8.6 L10.6 24.6 Z" fill="#f01414" stroke="#7a0a0a" stroke-width=".8" stroke-linejoin="round"/><path d="M5 26.75 L7 21.4 L10.6 24.6 Z" fill="#e8cc98" stroke="#5a4020" stroke-width=".7"/><path d="M5 26.75 L5.8 24.6 L7.2 25.8 Z" fill="#111"/><path d="M21.6 5.4 L23.6 3.2 L27.2 6.4 L25.2 8.6 Z" fill="#f49ab4" stroke="#a05070" stroke-width=".7"/></svg>
<svg class="ico" style="left:0px;top:102px" width="30" height="30" viewBox="0 0 30 30"><circle cx="15.8" cy="16.4" r="11" fill="#d0d0d0"/><circle cx="14.75" cy="15.25" r="11" fill="#a99172" stroke="#2a2012" stroke-width="1.3"/></svg>
<svg class="ico" style="left:30px;top:102px" width="30" height="30" viewBox="0 0 30 30"><path d="M26.25 5.5 C14 3 2 12 7 22 C8 24.4 9.6 26 11.25 26.75" fill="none" stroke="#111" stroke-width="2"/><path d="M6.6 16.6 C12 12.4 19 11.4 25 12.4" fill="none" stroke="#777" stroke-width="1"/><path d="M5.4 20 C6 23 8 25.6 10 26.6" fill="none" stroke="#555" stroke-width=".8"/></svg>
<svg class="ico" style="left:0px;top:132px" width="30" height="30" viewBox="0 0 30 30"><path d="M18.4 27.6 L27 8 L25.6 4.9 Z" fill="#d0d0d0"/><path d="M3.75 7.4 L25.6 4.9 L17.5 27.4 Z" fill="#a99172" stroke="#2a2012" stroke-width="1.3" stroke-linejoin="round"/></svg>
<svg class="ico" style="left:30px;top:132px" width="30" height="30" viewBox="0 0 30 30"><path d="M6.4 8.6 C12 4.6 22 4.4 25.4 9.4 C27.4 14 24 18.6 19 19.4 C15 19.8 14 15 17 12.8 C20.4 11 23.4 14 21.6 17.4 C19 22 13 26 10.4 24.4 C8.6 23 10 17 12.4 14.4 C9 16 5.6 20 6 24.4 M6 24.4 L4.6 22 M6 24.4 L8.4 23.4" fill="none" stroke="#111" stroke-width="1.6" stroke-linecap="round" stroke-linejoin="round"/></svg>
<svg class="ico" style="left:0px;top:169px" width="30" height="30" viewBox="0 0 30 30"><path d="M11.9 3.4 L18.5 9.2 L10.4 12.0 Z M26.9 9.0 L20.6 16.5 L17.2 8.6 Z M23.0 25.0 L14.0 19.4 L21.2 14.6 Z M3.8 19.6 L10.5 11.7 L14.2 19.4 Z " fill="#f01010" stroke="#a00000" stroke-width=".7" stroke-linejoin="round"/><circle cx="15.6" cy="14.0" r="1.6" fill="#fff"/></svg>
<svg class="ico" style="left:30px;top:169px" width="30" height="30" viewBox="0 0 30 30"><path d="M4.4 16.5 L20 14 L25.6 17.75 L11.9 21.5 Z" fill="#c9ab7c" stroke="#5a4424" stroke-width=".8"/><path d="M4.4 16.5 L11.9 21.5 L11.9 25.9 L4.4 20.25 Z" fill="#a08458" stroke="#5a4424" stroke-width=".8"/><path d="M11.9 21.5 L25.6 17.75 L25.6 22.1 L11.9 25.9 Z" fill="#6e5430" stroke="#4a3418" stroke-width=".8"/><path d="M14.75 3.2 L10.4 11.5 L13.1 11.5 L13.1 17 L16.9 17 L16.9 11.5 L19.4 11.5 Z" fill="#f01010" stroke="#a00000" stroke-width=".7"/></svg>
<svg class="ico" style="left:0px;top:200px" width="30" height="30" viewBox="0 0 30 30"><path d="M6 12 C8 4.5 19 3 23.5 9.5" fill="none" stroke="#f01010" stroke-width="3.2"/><path d="M19.6 6.4 L27 11.6 L18.6 13 Z" fill="#f01010" stroke="#a00000" stroke-width=".5"/><path d="M24 17 C22 24 12 25.5 7.5 20.5" fill="none" stroke="#f01010" stroke-width="3.2"/><path d="M3 17 L10.8 18.4 L5.8 24.8 Z" fill="#f01010" stroke="#a00000" stroke-width=".5"/></svg>
<svg class="ico" style="left:30px;top:200px" width="30" height="30" viewBox="0 0 30 30"><path d="M8 20 L8 23.5 C9 27 23 27 24.5 23.5 L24.5 20" fill="#6e5430" stroke="#4a3418" stroke-width=".8"/><ellipse cx="16.2" cy="20" rx="8.3" ry="3.4" fill="#b09468" stroke="#5a4424" stroke-width=".8"/><path d="M5.6 2.6 C15 2.6 23.5 9 24 18" fill="none" stroke="#e01010" stroke-width="1.8"/><path d="M16.5 19 C15.5 15 13.5 12 11 10" fill="none" stroke="#f01010" stroke-width="3"/><path d="M6.2 8 L14.6 8.6 L9.4 14.6 Z" fill="#f01010" stroke="#a00000" stroke-width=".5"/></svg>
<svg class="ico" style="left:0px;top:230px" width="30" height="30" viewBox="0 0 30 30"><path d="M3.1 6.1 L18.75 2.4 L25.6 17.4 L6.25 24.25 Z" fill="#fff" stroke="#444" stroke-width="1.1"/><path d="M15.6 11.75 L21.9 10.5 L25.6 17.4 L18.75 19.25 Z" fill="#a89068" stroke="#5a4424" stroke-width=".8"/><path d="M14 12 L8.4 8.6" stroke="#f01010" stroke-width="2.8"/><path d="M5.4 6.6 L12.2 6.8 L8.6 12.2 Z" fill="#f01010" stroke="#a00000" stroke-width=".5"/></svg>
<svg class="ico" style="left:30px;top:230px" width="30" height="30" viewBox="0 0 30 30"><path d="M9 24.5 C2 16 6 4 20 2.6" fill="none" stroke="#111" stroke-width="1.9"/><path d="M13 9 C18 5 24 5.5 27.5 8.5" fill="none" stroke="#111" stroke-width="1.6"/><path d="M14.5 18 C13 13 17 9 23 10.5" fill="none" stroke="#111" stroke-width="1.5"/><path d="M18 12 L12 7.4" stroke="#f01010" stroke-width="2.8"/><path d="M8 4.4 L15.4 5 L11 10.6 Z" fill="#f01010" stroke="#a00000" stroke-width=".5"/></svg>
<svg class="ico" style="left:0px;top:264px" width="30" height="30" viewBox="0 0 30 30"><path d="M15 17 L26 12 L26 19 L16 23 Z" fill="#bdbdbd"/><path d="M13.5 16.5 L4.2 22 L5.4 25.4 L15.5 19.6 Z" fill="#f0c020" stroke="#7a5c00" stroke-width=".7"/><path d="M6 21.6 l1 1.6 M8 20.4 l1 1.6 M10 19.2 l1 1.6 M12 18 l1 1.6" stroke="#7a5c00" stroke-width=".6"/><rect x="10.6" y="5" width="13.8" height="13.6" rx="3.4" fill="#666a6e" stroke="#3a3c40" stroke-width=".9" transform="rotate(-8 17.5 11.8)"/><circle cx="19.6" cy="11" r="3.7" fill="#f4c420" stroke="#7a5c00" stroke-width=".6"/><circle cx="12.2" cy="11" r="1.7" fill="#f4c420" stroke="#7a5c00" stroke-width=".5"/></svg>
<svg class="ico" style="left:30px;top:264px" width="30" height="30" viewBox="0 0 30 30"><path d="M4.4 16.6 L11.2 22.4 M4.6 21.6 L10 16.6 M7.5 19.25 L20 7.4 M7.5 19.25 L16.25 26.1 M16.8 4.8 L22.6 10.6 M22.5 4.9 L17.4 10.4 M20 7.4 L26.9 14.9" stroke="#111" stroke-width="1.5" fill="none" stroke-linecap="round"/><text x="6" y="12.6" font-family="Liberation Sans, sans-serif" font-size="9.5" font-weight="bold" fill="#111">3</text></svg>
<svg class="ico" style="left:0px;top:294px" width="30" height="30" viewBox="0 0 30 30"><path d="M14 12 L26 9 L15 24 Z" fill="#c4c4c4"/><path d="M25 4.9 C14 3.5 2 10 3.5 18 C4 22 6.5 25 9.4 26.1 Z" fill="#f4c422" stroke="#8a6800" stroke-width="1"/><path d="M19.4 9.4 C14 9 8.4 13 8.8 18 C8.9 19.6 9.6 21 10.8 21.6 Z" fill="#d4d4cc" stroke="#8a6800" stroke-width=".7"/><path d="M6 12 l1.6 1 M9.6 8.6 l1 1.5 M14.4 6.4 l.5 1.7 M4.4 16.6 l1.8 .2 M5.4 21 l1.6 -.7" stroke="#8a6800" stroke-width=".6"/></svg>
<svg class="ico" style="left:30px;top:294px" width="30" height="30" viewBox="0 0 30 30"><path d="M10 15.5 H28 V18 H10 Z" fill="#c8c8c8"/><rect x="7.5" y="6.75" width="19.4" height="8.2" fill="#fff" stroke="#111" stroke-width="1.3"/><text x="17.2" y="13.6" font-family="Liberation Sans, sans-serif" font-size="7.6" font-weight="bold" text-anchor="middle" fill="#111">ABC</text><path d="M7.5 11 L7.5 23" stroke="#111" stroke-width="1.3"/><path d="M5.4 22.2 L9.6 22.2 L7.5 27.4 Z" fill="#111"/></svg>
<svg class="ico" style="left:0px;top:324px" width="30" height="30" viewBox="0 0 30 30"><path d="M3.75 24.25 L22 14.5" stroke="#10c020" stroke-width="2.6" stroke-dasharray="9 0"/><path d="M3.75 24.25 L12 19.8" stroke="#0a8a14" stroke-width="2.6" stroke-dasharray="1.4 1.2"/><path d="M24.6 13 L18.4 13.4 L20.8 17.8 Z" fill="#10c020" stroke="#0a7010" stroke-width=".5"/><path d="M6.9 14.25 L23 24.6" stroke="#e81010" stroke-width="2.6"/><path d="M27 27.2 L20.6 26.4 L23.4 21.8 Z" fill="#e81010" stroke="#900" stroke-width=".5"/><path d="M13.75 27.4 L13.75 11" stroke="#1020e0" stroke-width="2.8"/><path d="M10.4 11.9 L17.1 11.9 L13.75 4.1 Z" fill="#1020e0" stroke="#000890" stroke-width=".5"/></svg>
<svg class="ico" style="left:30px;top:324px" width="30" height="30" viewBox="0 0 30 30"><path d="M19 24 L27.5 20 L26 14 L21 16 Z" fill="#b0b0b0"/><text x="5.6" y="26.6" font-family="Liberation Serif, serif" font-size="29" font-weight="bold" font-style="italic" fill="#3a2e1e" stroke="#3a2e1e" stroke-width="1.6">A</text><text x="5.6" y="26.6" font-family="Liberation Serif, serif" font-size="29" font-weight="bold" font-style="italic" fill="#bca47e">A</text></svg>
<svg class="ico" style="left:0px;top:360px" width="30" height="30" viewBox="0 0 30 30"><ellipse cx="15" cy="15" rx="11.4" ry="5.2" transform="rotate(18 15 15)" fill="none" stroke="#2a2c30" stroke-width="2.6"/><path d="M19.5 6.5 C23.5 12 22.5 21 16 25.6" fill="none" stroke="#2a80f0" stroke-width="3.2"/><path d="M15.6 4 L23.6 7.6 L17.4 12.2 Z" fill="#2a80f0" stroke="#0a48a8" stroke-width=".5"/><path d="M10.5 22.5 C6.5 17 8 9.5 13 6" fill="none" stroke="#2a80f0" stroke-width="3.2"/><path d="M14.6 25.6 L6.6 22.8 L12.2 17.6 Z" fill="#2a80f0" stroke="#0a48a8" stroke-width=".5"/><path d="M4.2 11.5 C8 9.4 14 9.6 19 11.4" fill="none" stroke="#2a2c30" stroke-width="2.4"/></svg>
<svg class="ico" style="left:30px;top:360px" width="30" height="30" viewBox="0 0 30 30"><path d="M6 22.5 C9 20.5 10.5 18 11.5 15 L13.5 8.5 C14.2 6.6 16.4 7.2 16 9.2 L15.4 12.6 L18.4 6.4 C19.4 4.6 21.6 5.6 20.8 7.6 L18.6 13 L22.6 7.4 C23.8 5.8 25.8 7 24.8 8.8 L21.2 14.6 L25 11 C26.4 9.8 28 11.4 26.8 12.8 L22.4 18 C24 17.6 26 17.2 27.4 17.4 C28.6 18.2 27.6 19.6 26.2 19.8 C22 20.6 18 23 13 26.6 Z" fill="#fff" stroke="#3a3a3a" stroke-width="1.1" stroke-linejoin="round"/></svg>
<svg class="ico" style="left:0px;top:390px" width="30" height="30" viewBox="0 0 30 30"><ellipse cx="14" cy="19" rx="8" ry="2.4" fill="#c8c8c8"/><path d="M16 16 L24.4 25" stroke="#1a1a1a" stroke-width="3.2" stroke-linecap="round"/><circle cx="11.25" cy="11.1" r="6.3" fill="#8fb8dc" stroke="#1e2022" stroke-width="1.7"/><path d="M7.4 9.4 C8.4 6.8 12 6 14.4 7.4" stroke="#d8ecfa" stroke-width="1.6" fill="none"/></svg>
<svg class="ico" style="left:30px;top:390px" width="30" height="30" viewBox="0 0 30 30"><path d="M18 15.6 L25 24.4" stroke="#1a1a1a" stroke-width="2.8" stroke-linecap="round"/><circle cx="14.4" cy="11.75" r="5" fill="#8fb8dc" stroke="#1e2022" stroke-width="1.6"/><path d="M5.4 4.4 L10.4 5.6 L6.8 9.4 Z M23.4 4.4 L18.6 5.8 L22.4 9.2 Z M5 20.4 L6.6 15.2 L10.4 18.8 Z M24.6 19 L19.6 17.8 L23 14 Z" fill="#2a80f0" stroke="#0a48a8" stroke-width=".5"/></svg>
<svg class="ico" style="left:0px;top:421px" width="30" height="30" viewBox="0 0 30 30"><path d="M13 14 L24 25" stroke="#1a1a1a" stroke-width="3" stroke-linecap="round"/><circle cx="9.4" cy="10.1" r="5.2" fill="#8fb8dc" stroke="#1e2022" stroke-width="1.7"/><path d="M10.6 23 L12.4 9.2 L15.4 11.8 C19 8.4 25 8.6 27 13 C27.4 17 25 20 22.4 21.6 C23.4 18 21.4 15.6 18.6 16.4 L20.4 19.6 Z" fill="#2a80f0" stroke="#0a3c98" stroke-width=".7" stroke-linejoin="round"/></svg>
<svg class="ico" style="left:30px;top:421px" width="30" height="30" viewBox="0 0 30 30"><g transform="translate(29 0) scale(-1 1)"><path d="M13 14 L24 25" stroke="#1a1a1a" stroke-width="3" stroke-linecap="round"/><circle cx="9.4" cy="10.1" r="5.2" fill="#8fb8dc" stroke="#1e2022" stroke-width="1.7"/><path d="M10.6 23 L12.4 9.2 L15.4 11.8 C19 8.4 25 8.6 27 13 C27.4 17 25 20 22.4 21.6 C23.4 18 21.4 15.6 18.6 16.4 L20.4 19.6 Z" fill="#2a80f0" stroke="#0a3c98" stroke-width=".7" stroke-linejoin="round"/></g></svg>
<svg class="ico" style="left:0px;top:457px" width="30" height="30" viewBox="0 0 30 30"><circle cx="15.4" cy="5.2" r="1.7" fill="#111"/><path d="M15.4 7 C12.4 7.6 11.6 10.4 11.4 13.6 L12.4 14.2 L12.2 22.6 L14.4 22.8 L15.3 17 L16.4 22.8 L18.6 22.6 L18.6 14.4 L19.8 13.4 C19.6 10.2 18.6 7.6 15.4 7 Z" fill="#fff" stroke="#111" stroke-width="1.5" stroke-linejoin="round"/><path d="M8 21.6 L22 26.6 M8 26.8 L22 21.4" stroke="#f01010" stroke-width="1.5"/></svg>
<svg class="ico" style="left:30px;top:457px" width="30" height="30" viewBox="0 0 30 30"><path d="M5.4 14.6 C9 8.6 19 6.4 26.8 12.4 C22 18.4 11 20 5.4 14.6 Z" fill="#f4f4f4" stroke="#222" stroke-width="1"/><path d="M5.2 13.4 C9 6.6 20 4.4 27.2 11.6" fill="none" stroke="#1a1a1a" stroke-width="2.2"/><circle cx="13.8" cy="14.4" r="3.7" fill="#6a6a6a" stroke="#111" stroke-width=".9"/><circle cx="13.8" cy="14.4" r="1.7" fill="#000"/><circle cx="12.6" cy="13.2" r=".8" fill="#fff"/><path d="M7 17.4 C12 21.4 20 20.4 25 15.6" fill="none" stroke="#aaa" stroke-width="1.6"/></svg>
<svg class="ico" style="left:0px;top:487px" width="30" height="30" viewBox="0 0 30 30"><ellipse cx="10" cy="14" rx="4" ry="5.9" fill="#050505" transform="rotate(-8 10 14)"/><ellipse cx="12.2" cy="24" rx="2.5" ry="2.7" fill="#050505" transform="rotate(-8 12.2 24)"/><ellipse cx="21.3" cy="9" rx="4" ry="5.9" fill="#050505" transform="rotate(8 21.3 9)"/><ellipse cx="20" cy="18.8" rx="2.5" ry="2.7" fill="#050505" transform="rotate(8 20 18.8)"/></svg>
<svg class="ico" style="left:30px;top:487px" width="30" height="30" viewBox="0 0 30 30"><path d="M16.4 3.4 L27.8 14.2 L16.4 25.9 Z" fill="#050505"/><circle cx="14.6" cy="14.2" r="8.7" fill="#fff" stroke="#050505" stroke-width="1.5"/><path d="M4.2 14.2 H24" stroke="#050505" stroke-width="1.4"/><text x="14.6" y="12.2" font-family="Liberation Sans, sans-serif" font-size="7.6" font-weight="bold" text-anchor="middle" fill="#050505">C</text><text x="14.6" y="21.6" font-family="Liberation Sans, sans-serif" font-size="6.6" font-weight="bold" text-anchor="middle" fill="#050505">A-5</text></svg>
<div class="abs" style="left:2px;top:69px;width:58px;height:2px;border-top:1px solid #a8a8a8;border-bottom:1px solid #fff"></div>
<div class="abs" style="left:2px;top:165px;width:58px;height:2px;border-top:1px solid #a8a8a8;border-bottom:1px solid #fff"></div>
<div class="abs" style="left:2px;top:262px;width:58px;height:2px;border-top:1px solid #a8a8a8;border-bottom:1px solid #fff"></div>
<div class="abs" style="left:2px;top:357px;width:58px;height:2px;border-top:1px solid #a8a8a8;border-bottom:1px solid #fff"></div>
<div class="abs" style="left:2px;top:454px;width:58px;height:2px;border-top:1px solid #a8a8a8;border-bottom:1px solid #fff"></div>
<div class="abs" style="left:2px;top:3px;width:58px;height:2px;border-top:1px solid #a8a8a8;border-bottom:1px solid #fff"></div>
<div class="abs" style="left:0;top:516px;width:62px;height:2px;border-top:1px solid #a0a0a0;border-bottom:1px solid #fff"></div>
</div>
<div id="status" class="abs">
<svg style="position:absolute;left:0;top:5px" width="84" height="23" viewBox="0 0 84 23"><defs><radialGradient id="sbg" cx=".4" cy=".35" r=".7"><stop offset="0" stop-color="#fff6dc"/><stop offset="1" stop-color="#e2c890"/></radialGradient></defs>
<g stroke="#6a4a16" stroke-width="2.2" fill="url(#sbg)"><circle cx="12.3" cy="11.2" r="8.6"/><circle cx="41" cy="11.2" r="8.6"/><circle cx="68.8" cy="11.2" r="8.6"/></g>
<path d="M12.3 17 L10.6 10.5 A3 3 0 1 1 14 10.5 Z" fill="#f0a0a0" stroke="#c07070" stroke-width=".6"/>
<circle cx="41" cy="7.2" r="1.7" fill="#8a8a80"/><path d="M38.6 10 H43.4 V14 H42.4 V17.4 H39.6 V14 H38.6 Z" fill="#8a8a80"/>
<path d="M72.6 8 A5 5 0 1 0 72.6 14.6" fill="none" stroke="#a8a090" stroke-width="2"/></svg>
<div class="vs" style="left:88px"></div><i style="position:absolute;left:59px;top:26.5px;width:58px;height:2px;background:#54606c"></i><i style="position:absolute;left:122px;top:26.5px;width:59px;height:2px;background:#54606c"></i><i style="position:absolute;left:183px;top:26.5px;width:59px;height:2px;background:#54606c"></i><i style="position:absolute;left:1162px;top:26.5px;width:190px;height:2px;background:#5a6c84"></i>
<svg style="position:absolute;left:96.5px;top:5px" width="21" height="21" viewBox="0 0 21 21"><circle cx="10.5" cy="10.5" r="9" fill="#fff" stroke="#1a3a6a" stroke-width="2.2"/><text x="10.5" y="15.5" font-family="Liberation Sans, sans-serif" font-weight="bold" font-size="14" text-anchor="middle" fill="#111">?</text></svg>
<div class="st"><span class="sx" id="sttxt" style="transform:scaleX(0.998)">Выберите объекты. Воспользуйтесь клавишей Shift, чтобы увеличить выбранную область. Перетащите мышь, чтобы выбрать несколько об</span></div>
<div class="vs" style="left:1021px"></div>
<div class="meas"><span class="sx" id="meastxt" style="transform:scaleX(0.994)">Измерения</span></div>
<div class="box"></div>
</div>
<div id="ei" class="abs">
<div class="abs ttl"><span class="sx" id="eittl" style="transform:scaleX(0.990)">Данные объекта</span></div>
<div class="abs cls"><svg width="12" height="12" viewBox="0 0 12 12"><path d="M3.5 3.5 L8.5 8.5 M8.5 3.5 L3.5 8.5" stroke="#fff" stroke-width="2"/></svg></div>
<div class="abs in">
<div class="abs" style="left:7px;top:8px;font-size:12px;font-weight:bold;white-space:nowrap"><span class="sx" id="eihd" style="transform:scaleX(0.969)">Сплошной компонент (46 в</span></div>
<svg class="abs" style="left:329px;top:3px" width="14" height="20" viewBox="0 0 14 20"><rect x="1" y="1" width="12" height="10" fill="#000"/><rect x="3.5" y="4" width="7" height="2.6" fill="#fff"/><path d="M7 13 L2 18 L12 18 Z" fill="#000"/><rect x="0" y="18.5" width="14" height="1" fill="#fff"/></svg>
<div class="hr" style="top:25px"></div>
<div class="abs" style="left:11px;top:33px;width:46px;height:47px;border:1px solid #9a9a9a;background:#f0f0f0"><svg width="44" height="45" viewBox="0 0 44 45"><rect x="2" y="2" width="40" height="41" fill="#fff" stroke="#c8c8c8"/><path d="M2.5 2.5 L2.5 42.5 L41.5 42.5 Z" fill="#acaed2"/></svg></div>
<div class="lbl" style="top:37px"><span class="sx sr" id="l1" style="transform:scaleX(0.929)">Слой:</span></div>
<div class="inp" style="top:34px"><span class="sx" id="f1" style="transform:scaleX(0.966)">Layer0</span><div style="position:absolute;right:0;top:0;width:16px;height:17px;background:#f0f0f0;border:1px solid;border-color:#fff #8a8a8a #8a8a8a #fff"><div style="position:absolute;left:3px;top:6px;border:4px solid transparent;border-top:4px solid #000;border-bottom:0"></div></div></div>
<div class="lbl" style="top:58.5px"><span class="sx sr" id="l2" style="transform:scaleX(0.977)">Название:</span></div>
<div class="inp" style="top:55.5px"></div>
<div class="lbl" style="top:72px;line-height:13.5px"><span class="sx sr" id="l3" style="transform:scaleX(0.966)">Название</span><br><span class="sx sr" id="l4" style="transform:scaleX(1.014)">определения:</span></div>
<div class="inp" style="top:77px"><span class="sx" id="f2" style="transform:scaleX(1.046)">3/4</span></div>
<div class="lbl" style="top:101.5px"><span class="sx sr" id="l5" style="transform:scaleX(0.951)">Том:</span></div>
<div class="inp" style="top:98.5px;background:#f0f0f0"><span class="sx" id="f3" style="transform:scaleX(0.973)">1720320 Миллиметры ³</span></div>
<div class="hr" style="top:124px"></div>
<div class="cb" style="left:11px;top:131.5px"></div><div class="cbl" style="left:28px;top:131px"><span class="sx" id="c1" style="transform:scaleX(1.005)">Скрыто</span></div>
<div class="cb" style="left:11px;top:152px"></div><div class="cbl" style="left:28px;top:152px"><span class="sx" id="c2" style="transform:scaleX(0.981)">Заблокировано</span></div>
<div class="cb" style="left:117px;top:131.5px"><svg width="11" height="11" viewBox="0 0 11 11" style="position:absolute;left:0;top:0"><path d="M2 5 L4.4 8 L9 2.4" fill="none" stroke="#000" stroke-width="1.8"/></svg></div><div class="cbl" style="left:134px;top:131px"><span class="sx" id="c3" style="transform:scaleX(1.016)">Создавать тени</span></div>
<div class="cb" style="left:117px;top:152px"><svg width="11" height="11" viewBox="0 0 11 11" style="position:absolute;left:0;top:0"><path d="M2 5 L4.4 8 L9 2.4" fill="none" stroke="#000" stroke-width="1.8"/></svg></div><div class="cbl" style="left:134px;top:152px"><span class="sx" id="c4" style="transform:scaleX(0.979)">Принимать тени</span></div>
</div></div>
<div id="ly" class="abs">
<div class="abs ttl"><span class="sx" id="lyt" style="transform:scaleX(0.925)">Слои</span></div>
<div class="abs cls"><svg width="14" height="13" viewBox="0 0 14 13"><path d="M4.2 3.6 L9.8 9.4 M9.8 3.6 L4.2 9.4" stroke="#222" stroke-width="3.2"/><path d="M4.2 3.6 L9.8 9.4 M9.8 3.6 L4.2 9.4" stroke="#fff" stroke-width="1.4"/></svg></div>
<div class="abs in">
<svg class="abs" style="left:5px;top:4.5px" width="50" height="20" viewBox="0 0 50 20"><circle cx="10" cy="10" r="7.4" fill="#fff" stroke="#000" stroke-width="1.7"/><path d="M5.6 10 H14.4 M10 5.6 V14.4" stroke="#000" stroke-width="2.4"/><circle cx="34.5" cy="10" r="7" fill="#fff" stroke="#8a8a8a" stroke-width="1.4"/><path d="M30.5 10 H38.5" stroke="#8a8a8a" stroke-width="2.2"/></svg>
<svg class="abs" style="left:206px;top:4.5px" width="18" height="20" viewBox="0 0 18 20"><rect x="2" y="5" width="8" height="11" fill="#dceaff" stroke="#000" stroke-width="1.2"/><path d="M3.5 8 H8.5 M3.5 10.5 H8.5 M3.5 13 H8.5" stroke="#2a5ad0" stroke-width="1"/><path d="M10 3 L16.5 10.5 L10 18 Z" fill="#000"/></svg>
<div class="abs hdr"><span style="left:5px"><b class="sx" id="h1" style="transform:scaleX(0.987)">Название</b></span><svg style="position:absolute;left:68px;top:4px" width="10" height="8" viewBox="0 0 10 8"><path d="M1 1 H9 L5 7 Z" fill="none" stroke="#aaa"/></svg><i style="left:134px"></i><span style="left:141px"><b class="sx" id="h2" style="transform:scaleX(1.036)">Види...</b></span><i style="left:185px"></i><span style="left:191px"><b class="sx" id="h3" style="transform:scaleX(0.901)">Цве</b></span></div>
<div class="abs list">
<div class="row" style="top:2.5px"><div class="rd"><b style="position:absolute;left:3px;top:3px;width:4px;height:4px;border-radius:50%;background:#000"></b></div><div class="nm">Layer0</div><div class="ck"><svg width="11" height="11" viewBox="0 0 11 11" style="position:absolute;left:0;top:0"><path d="M1.6 5.2 L4.2 8.4 L9.4 2" fill="none" stroke="#000" stroke-width="1.9"/></svg></div><div class="sw" style="background:#f25a5a"></div></div>
<div class="row" style="top:19.5px"><div class="rd"></div><div class="nm">001-Фундамент</div><div class="ck"><svg width="11" height="11" viewBox="0 0 11 11" style="position:absolute;left:0;top:0"><path d="M1.6 5.2 L4.2 8.4 L9.4 2" fill="none" stroke="#000" stroke-width="1.9"/></svg></div><div class="sw" style="background:#0f9b8c"></div></div>
<div class="row" style="top:36.5px"><div class="rd"></div><div class="nm">01</div><div class="ck"><svg width="11" height="11" viewBox="0 0 11 11" style="position:absolute;left:0;top:0"><path d="M1.6 5.2 L4.2 8.4 L9.4 2" fill="none" stroke="#000" stroke-width="1.9"/></svg></div><div class="sw" style="background:#6b4504"></div></div>
<div class="row" style="top:53.5px"><div class="rd"></div><div class="nm">02</div><div class="ck"><svg width="11" height="11" viewBox="0 0 11 11" style="position:absolute;left:0;top:0"><path d="M1.6 5.2 L4.2 8.4 L9.4 2" fill="none" stroke="#000" stroke-width="1.9"/></svg></div><div class="sw" style="background:#0f9b8c"></div></div>
<div class="row" style="top:70.5px"><div class="rd"></div><div class="nm">03</div><div class="ck"><svg width="11" height="11" viewBox="0 0 11 11" style="position:absolute;left:0;top:0"><path d="M1.6 5.2 L4.2 8.4 L9.4 2" fill="none" stroke="#000" stroke-width="1.9"/></svg></div><div class="sw" style="background:#7c7ca3"></div></div>
<div class="row" style="top:87.5px"><div class="rd"></div><div class="nm">04</div><div class="ck"><svg width="11" height="11" viewBox="0 0 11 11" style="position:absolute;left:0;top:0"><path d="M1.6 5.2 L4.2 8.4 L9.4 2" fill="none" stroke="#000" stroke-width="1.9"/></svg></div><div class="sw" style="background:#a010f0"></div></div>
<div class="row" style="top:104.5px"><div class="rd"></div><div class="nm">05</div><div class="ck"><svg width="11" height="11" viewBox="0 0 11 11" style="position:absolute;left:0;top:0"><path d="M1.6 5.2 L4.2 8.4 L9.4 2" fill="none" stroke="#000" stroke-width="1.9"/></svg></div><div class="sw" style="background:#d24a04"></div></div>
<div class="row" style="top:121.5px"><div class="rd"></div><div class="nm">06</div><div class="ck"><svg width="11" height="11" viewBox="0 0 11 11" style="position:absolute;left:0;top:0"><path d="M1.6 5.2 L4.2 8.4 L9.4 2" fill="none" stroke="#000" stroke-width="1.9"/></svg></div><div class="sw" style="background:#b14a08"></div></div>
<div class="row" style="top:138.5px"><div class="rd"></div><div class="nm">07</div><div class="ck"><svg width="11" height="11" viewBox="0 0 11 11" style="position:absolute;left:0;top:0"><path d="M1.6 5.2 L4.2 8.4 L9.4 2" fill="none" stroke="#000" stroke-width="1.9"/></svg></div><div class="sw" style="background:#cf6a08"></div></div>
<div class="row" style="top:155.5px"><div class="rd"></div><div class="nm">08</div><div class="ck"><svg width="11" height="11" viewBox="0 0 11 11" style="position:absolute;left:0;top:0"><path d="M1.6 5.2 L4.2 8.4 L9.4 2" fill="none" stroke="#000" stroke-width="1.9"/></svg></div><div class="sw" style="background:#d05a04"></div></div>
<div class="row" style="top:172.5px"><div class="rd"></div><div class="nm">09</div><div class="ck"><svg width="11" height="11" viewBox="0 0 11 11" style="position:absolute;left:0;top:0"><path d="M1.6 5.2 L4.2 8.4 L9.4 2" fill="none" stroke="#000" stroke-width="1.9"/></svg></div><div class="sw" style="background:#9e9ed0"></div></div>
<div class="row" style="top:189.5px"><div class="rd"></div><div class="nm">10</div><div class="ck"><svg width="11" height="11" viewBox="0 0 11 11" style="position:absolute;left:0;top:0"><path d="M1.6 5.2 L4.2 8.4 L9.4 2" fill="none" stroke="#000" stroke-width="1.9"/></svg></div><div class="sw" style="background:#f587ad"></div></div>
<div class="row" style="top:206.5px"><div class="rd"></div><div class="nm">11</div><div class="ck"><svg width="11" height="11" viewBox="0 0 11 11" style="position:absolute;left:0;top:0"><path d="M1.6 5.2 L4.2 8.4 L9.4 2" fill="none" stroke="#000" stroke-width="1.9"/></svg></div><div class="sw" style="background:#6b4504"></div></div>
<div class="row" style="top:223.5px"><div class="rd"></div><div class="nm">12</div><div class="ck"><svg width="11" height="11" viewBox="0 0 11 11" style="position:absolute;left:0;top:0"><path d="M1.6 5.2 L4.2 8.4 L9.4 2" fill="none" stroke="#000" stroke-width="1.9"/></svg></div><div class="sw" style="background:#0f9b8c"></div></div>
<div class="row" style="top:240.5px"><div class="rd"></div><div class="nm">13</div><div class="ck"><svg width="11" height="11" viewBox="0 0 11 11" style="position:absolute;left:0;top:0"><path d="M1.6 5.2 L4.2 8.4 L9.4 2" fill="none" stroke="#000" stroke-width="1.9"/></svg></div><div class="sw" style="background:#7c7ca3"></div></div>
<div class="row" style="top:257.5px"><div class="rd"></div><div class="nm">13-Перемычка</div><div class="ck"><svg width="11" height="11" viewBox="0 0 11 11" style="position:absolute;left:0;top:0"><path d="M1.6 5.2 L4.2 8.4 L9.4 2" fill="none" stroke="#000" stroke-width="1.9"/></svg></div><div class="sw" style="background:#6b4504"></div></div>
<div class="row" style="top:274.5px"><div class="rd"></div><div class="nm">14</div><div class="ck"><svg width="11" height="11" viewBox="0 0 11 11" style="position:absolute;left:0;top:0"><path d="M1.6 5.2 L4.2 8.4 L9.4 2" fill="none" stroke="#000" stroke-width="1.9"/></svg></div><div class="sw" style="background:#a010f0"></div></div>
<div class="row" style="top:291.5px"><div class="rd"></div><div class="nm">15</div><div class="ck"><svg width="11" height="11" viewBox="0 0 11 11" style="position:absolute;left:0;top:0"><path d="M1.6 5.2 L4.2 8.4 L9.4 2" fill="none" stroke="#000" stroke-width="1.9"/></svg></div><div class="sw" style="background:#d24a04"></div></div>
<div class="row" style="top:308.5px"><div class="rd"></div><div class="nm">16</div><div class="ck"><svg width="11" height="11" viewBox="0 0 11 11" style="position:absolute;left:0;top:0"><path d="M1.6 5.2 L4.2 8.4 L9.4 2" fill="none" stroke="#000" stroke-width="1.9"/></svg></div><div class="sw" style="background:#0f9b8c"></div></div>
<div class="row" style="top:325.5px"><div class="rd"></div><div class="nm">17</div><div class="ck"><svg width="11" height="11" viewBox="0 0 11 11" style="position:absolute;left:0;top:0"><path d="M1.6 5.2 L4.2 8.4 L9.4 2" fill="none" stroke="#000" stroke-width="1.9"/></svg></div><div class="sw" style="background:#7c7ca3"></div></div>
<div class="row" style="top:342.5px"><div class="rd"></div><div class="nm">18</div><div class="ck"><svg width="11" height="11" viewBox="0 0 11 11" style="position:absolute;left:0;top:0"><path d="M1.6 5.2 L4.2 8.4 L9.4 2" fill="none" stroke="#000" stroke-width="1.9"/></svg></div><div class="sw" style="background:#a010f0"></div></div>
<div class="row" style="top:359.5px"><div class="rd"></div><div class="nm">19</div><div class="ck"><svg width="11" height="11" viewBox="0 0 11 11" style="position:absolute;left:0;top:0"><path d="M1.6 5.2 L4.2 8.4 L9.4 2" fill="none" stroke="#000" stroke-width="1.9"/></svg></div><div class="sw" style="background:#d24a04"></div></div>
<div class="row" style="top:376.5px"><div class="rd"></div><div class="nm">20</div><div class="ck"><svg width="11" height="11" viewBox="0 0 11 11" style="position:absolute;left:0;top:0"><path d="M1.6 5.2 L4.2 8.4 L9.4 2" fill="none" stroke="#000" stroke-width="1.9"/></svg></div><div class="sw" style="background:#b14a08"></div></div>
<div class="row" style="top:393.5px"><div class="rd"></div><div class="nm">21</div><div class="ck"><svg width="11" height="11" viewBox="0 0 11 11" style="position:absolute;left:0;top:0"><path d="M1.6 5.2 L4.2 8.4 L9.4 2" fill="none" stroke="#000" stroke-width="1.9"/></svg></div><div class="sw" style="background:#cf6a08"></div></div>
<div class="row" style="top:410.5px"><div class="rd"></div><div class="nm">21-Перемычка</div><div class="ck"><svg width="11" height="11" viewBox="0 0 11 11" style="position:absolute;left:0;top:0"><path d="M1.6 5.2 L4.2 8.4 L9.4 2" fill="none" stroke="#000" stroke-width="1.9"/></svg></div><div class="sw" style="background:#6b4504"></div></div>
<div class="row" style="top:427.5px"><div class="rd"></div><div class="nm">22</div><div class="ck"><svg width="11" height="11" viewBox="0 0 11 11" style="position:absolute;left:0;top:0"><path d="M1.6 5.2 L4.2 8.4 L9.4 2" fill="none" stroke="#000" stroke-width="1.9"/></svg></div><div class="sw" style="background:#d05a04"></div></div>
<div class="row" style="top:444.5px"><div class="rd"></div><div class="nm">23</div><div class="ck"><svg width="11" height="11" viewBox="0 0 11 11" style="position:absolute;left:0;top:0"><path d="M1.6 5.2 L4.2 8.4 L9.4 2" fill="none" stroke="#000" stroke-width="1.9"/></svg></div><div class="sw" style="background:#9e9ed0"></div></div>
<div class="row" style="top:461.5px"><div class="rd"></div><div class="nm">24</div><div class="ck"><svg width="11" height="11" viewBox="0 0 11 11" style="position:absolute;left:0;top:0"><path d="M1.6 5.2 L4.2 8.4 L9.4 2" fill="none" stroke="#000" stroke-width="1.9"/></svg></div><div class="sw" style="background:#f587ad"></div></div>
<div class="row" style="top:478.5px"><div class="rd"></div><div class="nm">25</div><div class="ck"><svg width="11" height="11" viewBox="0 0 11 11" style="position:absolute;left:0;top:0"><path d="M1.6 5.2 L4.2 8.4 L9.4 2" fill="none" stroke="#000" stroke-width="1.9"/></svg></div><div class="sw" style="background:#80801a"></div></div>
<div class="row" style="top:495.5px"><div class="rd"></div><div class="nm">26</div><div class="ck"><svg width="11" height="11" viewBox="0 0 11 11" style="position:absolute;left:0;top:0"><path d="M1.6 5.2 L4.2 8.4 L9.4 2" fill="none" stroke="#000" stroke-width="1.9"/></svg></div><div class="sw" style="background:#0a0ad0"></div></div>
<div class="row" style="top:512.5px"><div class="rd"></div><div class="nm">27</div><div class="ck"><svg width="11" height="11" viewBox="0 0 11 11" style="position:absolute;left:0;top:0"><path d="M1.6 5.2 L4.2 8.4 L9.4 2" fill="none" stroke="#000" stroke-width="1.9"/></svg></div><div class="sw" style="background:#686868"></div></div>
<div class="row" style="top:529.5px"><div class="rd"></div><div class="nm">28</div><div class="ck"><svg width="11" height="11" viewBox="0 0 11 11" style="position:absolute;left:0;top:0"><path d="M1.6 5.2 L4.2 8.4 L9.4 2" fill="none" stroke="#000" stroke-width="1.9"/></svg></div><div class="sw" style="background:#800a80"></div></div>
<div class="row" style="top:546.5px"><div class="rd"></div><div class="nm">29</div><div class="ck"><svg width="11" height="11" viewBox="0 0 11 11" style="position:absolute;left:0;top:0"><path d="M1.6 5.2 L4.2 8.4 L9.4 2" fill="none" stroke="#000" stroke-width="1.9"/></svg></div><div class="sw" style="background:#b06a0a"></div></div>
<div class="row" style="top:563.5px"><div class="rd"></div><div class="nm">30</div><div class="ck"><svg width="11" height="11" viewBox="0 0 11 11" style="position:absolute;left:0;top:0"><path d="M1.6 5.2 L4.2 8.4 L9.4 2" fill="none" stroke="#000" stroke-width="1.9"/></svg></div><div class="sw" style="background:#ffcc00"></div></div>
<div class="row" style="top:580.5px"><div class="rd"></div><div class="nm">31</div><div class="ck"><svg width="11" height="11" viewBox="0 0 11 11" style="position:absolute;left:0;top:0"><path d="M1.6 5.2 L4.2 8.4 L9.4 2" fill="none" stroke="#000" stroke-width="1.9"/></svg></div><div class="sw" style="background:#6b4504"></div></div>
<div class="row" style="top:597.5px"><div class="rd"></div><div class="nm">32</div><div class="ck"><svg width="11" height="11" viewBox="0 0 11 11" style="position:absolute;left:0;top:0"><path d="M1.6 5.2 L4.2 8.4 L9.4 2" fill="none" stroke="#000" stroke-width="1.9"/></svg></div><div class="sw" style="background:#0f9b8c"></div></div>
<div class="row" style="top:614.5px"><div class="rd"></div><div class="nm">33</div><div class="ck"><svg width="11" height="11" viewBox="0 0 11 11" style="position:absolute;left:0;top:0"><path d="M1.6 5.2 L4.2 8.4 L9.4 2" fill="none" stroke="#000" stroke-width="1.9"/></svg></div><div class="sw" style="background:#6b4504"></div></div>
</div>
<div class="abs vsb"><svg style="position:absolute;left:4px;top:6px" width="9" height="6" viewBox="0 0 9 6"><path d="M0 5 L4.5 0.5 L9 5 Z" fill="#444"/></svg><div class="thumb" style="left:1px;top:18px;width:15px;height:270px"><div style="position:absolute;left:3px;top:128px;width:7px;height:7px;border-top:1px solid #666;border-bottom:1px solid #666"><div style="margin-top:2px;border-top:1px solid #666"></div></div></div><svg style="position:absolute;left:4px;top:622px" width="9" height="6" viewBox="0 0 9 6"><path d="M0 1 L4.5 5.5 L9 1 Z" fill="#444"/></svg></div>
<div class="abs hsb"><svg style="position:absolute;left:6px;top:3px" width="6" height="9" viewBox="0 0 6 9"><path d="M5 0 L0.5 4.5 L5 9 Z" fill="#444"/></svg><div class="thumbh" style="left:18px;top:1px;width:160px;height:14px"><div style="position:absolute;left:75px;top:3px;width:7px;height:7px;border-left:1px solid #666;border-right:1px solid #666"><div style="margin-left:2px;height:7px;border-left:1px solid #666"></div></div></div><svg style="position:absolute;left:198px;top:3px" width="6" height="9" viewBox="0 0 6 9"><path d="M1 0 L5.5 4.5 L1 9 Z" fill="#444"/></svg></div>
</div></div>
<div id="wc" class="abs"><div class="mn"><svg width="28" height="17"><rect x="8.5" y="9" width="11" height="3.4" rx=".8" fill="#fff" stroke="#4a5a70" stroke-width=".8"/></svg></div><div class="mx"><svg width="27" height="17"><rect x="10.5" y="3" width="8" height="8" fill="none" stroke="#4a5a70" stroke-width="2.6"/><rect x="10.5" y="3" width="8" height="8" fill="none" stroke="#fff" stroke-width="1.3"/><rect x="7.5" y="5.6" width="8" height="8" fill="#a8bcd6" stroke="#4a5a70" stroke-width="2.6"/><rect x="7.5" y="5.6" width="8" height="8" fill="none" stroke="#fff" stroke-width="1.3"/></svg></div><div class="cl"><svg width="47" height="17"><path d="M19 3.4 L28 12 M28 3.4 L19 12" stroke="#5a2a26" stroke-width="4.6"/><path d="M19 3.4 L28 12 M28 3.4 L19 12" stroke="#fff" stroke-width="2.8"/></svg></div></div>
<!--PANELS-->
<!--ARROWS--><svg class="abs" style="left:0;top:0;pointer-events:none" width="1366" height="768" viewBox="0 0 1366 768"><polygon points="55.8,425.4 124.6,469.8 112.5,480.2 174.6,546.9 168.8,551 105.2,486.5 95.8,496.2" fill="#fe0000"/><polygon points="592.6,342.9 672.8,348.3 667.4,363.2 753.7,390.2 751.3,396.8 664.4,369.8 660,384.8" fill="#fe0000"/></svg><!--/ARROWS-->
</body>
</html>
